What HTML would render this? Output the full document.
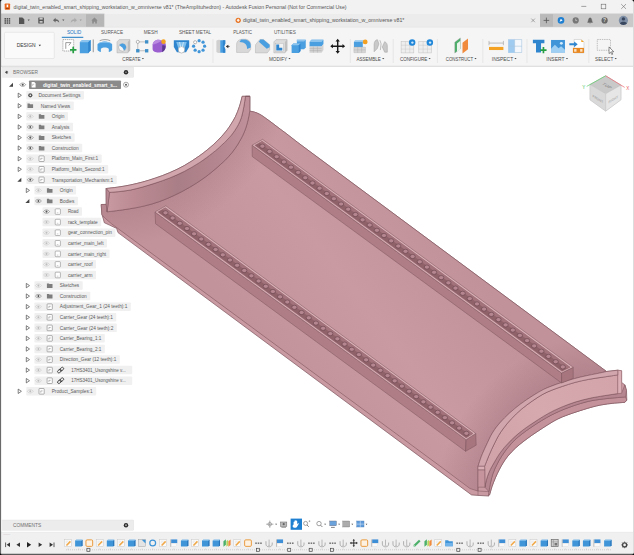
<!DOCTYPE html>
<html><head><meta charset="utf-8"><title>Fusion</title>
<style>
html,body{margin:0;padding:0;}
body{width:634px;height:555px;overflow:hidden;background:#fff;position:relative;font-family:"Liberation Sans",sans-serif;}
</style></head><body>
<svg width="634" height="555" viewBox="0 0 634 555" style="position:absolute;left:0;top:0">
<defs><linearGradient id="fg" gradientUnits="userSpaceOnUse" x1="250" y1="330" x2="420" y2="200"><stop offset="0" stop-color="#c3939b"/><stop offset="0.5" stop-color="#ca9aa2"/><stop offset="1" stop-color="#c2929a"/></linearGradient><linearGradient id="ig" gradientUnits="userSpaceOnUse" x1="106" y1="0" x2="250" y2="0"><stop offset="0" stop-color="#c99aa2"/><stop offset="0.2" stop-color="#bb8a93"/><stop offset="0.5" stop-color="#aa7e86"/><stop offset="0.8" stop-color="#b58790"/><stop offset="1" stop-color="#c0919a"/></linearGradient><linearGradient id="og" gradientUnits="userSpaceOnUse" x1="480" y1="480" x2="620" y2="380"><stop offset="0" stop-color="#cfa1a8"/><stop offset="0.5" stop-color="#d6a9ae"/><stop offset="1" stop-color="#d3a5ab"/></linearGradient><radialGradient id="sh1" gradientUnits="userSpaceOnUse" cx="609" cy="509.5" r="175"><stop offset="0.78" stop-color="#9c6f79" stop-opacity="0.4"/><stop offset="1" stop-color="#9c6f79" stop-opacity="0"/></radialGradient><radialGradient id="sh2" gradientUnits="userSpaceOnUse" cx="108" cy="62" r="185"><stop offset="0.8" stop-color="#a0727c" stop-opacity="0.34"/><stop offset="1" stop-color="#a0727c" stop-opacity="0"/></radialGradient></defs>
<path d="M106.1,188.5C108.1,188.3 114.0,187.7 118.0,187.1C122.0,186.5 126.0,185.9 130.1,185.0C134.1,184.2 138.1,183.2 142.3,182.1C146.6,180.9 150.8,179.7 155.3,178.1C159.9,176.6 164.7,174.8 169.6,172.7C174.5,170.6 179.6,168.2 184.6,165.4C189.6,162.5 195.0,159.1 199.8,155.6C204.7,152.1 209.8,147.9 213.8,144.3C217.7,140.7 220.9,137.3 223.6,134.2C226.4,131.0 228.3,128.4 230.2,125.5C232.2,122.5 233.9,119.6 235.5,116.5C237.0,113.4 238.3,109.9 239.4,106.6C240.6,103.2 241.7,98.0 242.2,96.3L249.9,96.3L249.9,111.0C250.9,111.4 252.9,111.6 254.4,112.1C255.9,112.5 257.7,113.3 259.1,114.0C260.6,114.7 261.1,115.1 263.1,116.4C265.1,117.8 268.4,120.1 271.0,122.1C273.6,124.0 276.3,126.1 278.9,128.1C281.5,130.1 283.3,131.3 286.8,134.0C290.3,136.7 297.8,142.5 300.0,144.2L606.5,371.5L617.8,370.2L621.6,370.8L621.6,382.4L624.9,384.9L626.5,390.6L626.8,400.1L624.9,402.3C622.9,402.5 616.6,402.9 612.8,403.3C608.9,403.7 605.5,404.1 601.9,404.8C598.2,405.5 595.1,406.2 590.8,407.4C586.5,408.6 580.7,410.4 576.0,412.0C571.3,413.5 566.4,415.3 562.6,416.8C558.8,418.4 556.5,419.6 553.1,421.5C549.8,423.4 545.9,426.0 542.3,428.3C538.8,430.6 534.9,433.2 531.8,435.3C528.8,437.5 526.6,439.0 523.9,441.1C521.2,443.2 518.3,445.5 515.6,447.9C513.0,450.4 510.1,453.3 508.0,455.9C505.9,458.4 504.5,460.7 503.0,463.0C501.6,465.3 500.6,467.1 499.3,469.6C498.0,472.1 496.6,474.9 495.4,477.8C494.2,480.6 492.9,483.9 491.9,486.8C491.0,489.6 490.0,493.5 489.6,494.8L488.3,496.0L477.9,495.4L471.5,494.9L118.0,232.6L116.6,228.4L109.5,225.1L104.3,222.7L103.3,218.9L101.9,214.4L101.2,204.5L106.2,204.4Z" fill="#ca9aa2" stroke="#7d545d" stroke-width="0.7" stroke-linejoin="round"/>
<path d="M106.2,204.4L101.2,204.5L101.9,214.6L104.7,217.9L111.8,224.0L440.0,466.1L470.0,488.5L477.9,491.0L478.0,466.3C478.4,465.2 479.4,461.9 480.1,459.9C480.8,457.8 481.6,455.7 482.4,453.8C483.2,451.9 484.0,450.1 484.9,448.2C485.7,446.3 486.6,444.4 487.6,442.4C488.5,440.4 489.5,438.3 490.6,436.1C491.8,434.0 492.8,432.0 494.5,429.7C496.1,427.3 498.0,424.9 500.5,422.2C503.0,419.4 506.0,416.3 509.3,413.3C512.6,410.3 516.5,407.0 520.4,404.1C524.3,401.2 528.8,398.2 532.6,395.8C536.4,393.3 540.0,391.3 543.2,389.6C546.5,388.0 548.7,387.1 552.0,385.9C555.2,384.6 558.8,383.4 562.6,382.2C566.4,380.9 570.8,379.5 574.8,378.5C578.7,377.4 582.5,376.6 586.2,375.8C589.9,375.0 593.5,374.3 596.9,373.6C600.3,372.9 604.9,371.9 606.5,371.5L300.0,144.2C297.8,142.5 290.3,136.7 286.8,134.0C283.3,131.3 281.5,130.1 278.9,128.1C276.3,126.1 273.6,124.0 271.0,122.1C268.4,120.1 265.1,117.8 263.1,116.4C261.1,115.1 260.6,114.7 259.1,114.0C257.7,113.3 255.9,112.5 254.4,112.1C252.9,111.6 250.9,111.4 250.2,111.3L249.9,111.0C249.5,112.2 249.1,115.0 248.7,116.9C248.3,118.7 248.0,120.6 247.4,122.6C246.9,124.6 246.2,126.8 245.5,128.9C244.7,131.0 243.9,133.1 242.9,135.2C241.9,137.3 240.9,139.1 239.6,141.3C238.3,143.6 236.9,146.0 235.0,148.6C233.2,151.2 230.8,154.2 228.4,156.8C226.1,159.5 223.3,162.0 220.7,164.3C218.1,166.7 215.8,168.7 212.9,171.1C209.9,173.5 206.9,176.0 203.0,178.7C199.1,181.4 194.3,184.6 189.6,187.3C184.9,190.1 179.6,192.9 174.6,195.2C169.6,197.6 164.6,199.7 159.6,201.5C154.6,203.3 149.6,204.7 144.6,205.9C139.6,207.2 134.3,208.1 129.6,208.8C124.9,209.6 120.1,210.2 116.4,210.7C112.6,211.2 108.6,211.6 107.1,211.8Z" fill="url(#fg)" stroke="#7d545d" stroke-width="0.6" stroke-linejoin="round"/>
<path d="M106.2,204.4L101.2,204.5L101.9,214.6L104.7,217.9L111.8,224.0L440.0,466.1L470.0,488.5L477.9,491.0L478.0,466.3C478.4,465.2 479.4,461.9 480.1,459.9C480.8,457.8 481.6,455.7 482.4,453.8C483.2,451.9 484.0,450.1 484.9,448.2C485.7,446.3 486.6,444.4 487.6,442.4C488.5,440.4 489.5,438.3 490.6,436.1C491.8,434.0 492.8,432.0 494.5,429.7C496.1,427.3 498.0,424.9 500.5,422.2C503.0,419.4 506.0,416.3 509.3,413.3C512.6,410.3 516.5,407.0 520.4,404.1C524.3,401.2 528.8,398.2 532.6,395.8C536.4,393.3 540.0,391.3 543.2,389.6C546.5,388.0 548.7,387.1 552.0,385.9C555.2,384.6 558.8,383.4 562.6,382.2C566.4,380.9 570.8,379.5 574.8,378.5C578.7,377.4 582.5,376.6 586.2,375.8C589.9,375.0 593.5,374.3 596.9,373.6C600.3,372.9 604.9,371.9 606.5,371.5L300.0,144.2C297.8,142.5 290.3,136.7 286.8,134.0C283.3,131.3 281.5,130.1 278.9,128.1C276.3,126.1 273.6,124.0 271.0,122.1C268.4,120.1 265.1,117.8 263.1,116.4C261.1,115.1 260.6,114.7 259.1,114.0C257.7,113.3 255.9,112.5 254.4,112.1C252.9,111.6 250.9,111.4 250.2,111.3L249.9,111.0C249.5,112.2 249.1,115.0 248.7,116.9C248.3,118.7 248.0,120.6 247.4,122.6C246.9,124.6 246.2,126.8 245.5,128.9C244.7,131.0 243.9,133.1 242.9,135.2C241.9,137.3 240.9,139.1 239.6,141.3C238.3,143.6 236.9,146.0 235.0,148.6C233.2,151.2 230.8,154.2 228.4,156.8C226.1,159.5 223.3,162.0 220.7,164.3C218.1,166.7 215.8,168.7 212.9,171.1C209.9,173.5 206.9,176.0 203.0,178.7C199.1,181.4 194.3,184.6 189.6,187.3C184.9,190.1 179.6,192.9 174.6,195.2C169.6,197.6 164.6,199.7 159.6,201.5C154.6,203.3 149.6,204.7 144.6,205.9C139.6,207.2 134.3,208.1 129.6,208.8C124.9,209.6 120.1,210.2 116.4,210.7C112.6,211.2 108.6,211.6 107.1,211.8Z" fill="url(#sh1)"/>
<path d="M106.2,204.4L101.2,204.5L101.9,214.6L104.7,217.9L111.8,224.0L440.0,466.1L470.0,488.5L477.9,491.0L478.0,466.3C478.4,465.2 479.4,461.9 480.1,459.9C480.8,457.8 481.6,455.7 482.4,453.8C483.2,451.9 484.0,450.1 484.9,448.2C485.7,446.3 486.6,444.4 487.6,442.4C488.5,440.4 489.5,438.3 490.6,436.1C491.8,434.0 492.8,432.0 494.5,429.7C496.1,427.3 498.0,424.9 500.5,422.2C503.0,419.4 506.0,416.3 509.3,413.3C512.6,410.3 516.5,407.0 520.4,404.1C524.3,401.2 528.8,398.2 532.6,395.8C536.4,393.3 540.0,391.3 543.2,389.6C546.5,388.0 548.7,387.1 552.0,385.9C555.2,384.6 558.8,383.4 562.6,382.2C566.4,380.9 570.8,379.5 574.8,378.5C578.7,377.4 582.5,376.6 586.2,375.8C589.9,375.0 593.5,374.3 596.9,373.6C600.3,372.9 604.9,371.9 606.5,371.5L300.0,144.2C297.8,142.5 290.3,136.7 286.8,134.0C283.3,131.3 281.5,130.1 278.9,128.1C276.3,126.1 273.6,124.0 271.0,122.1C268.4,120.1 265.1,117.8 263.1,116.4C261.1,115.1 260.6,114.7 259.1,114.0C257.7,113.3 255.9,112.5 254.4,112.1C252.9,111.6 250.9,111.4 250.2,111.3L249.9,111.0C249.5,112.2 249.1,115.0 248.7,116.9C248.3,118.7 248.0,120.6 247.4,122.6C246.9,124.6 246.2,126.8 245.5,128.9C244.7,131.0 243.9,133.1 242.9,135.2C241.9,137.3 240.9,139.1 239.6,141.3C238.3,143.6 236.9,146.0 235.0,148.6C233.2,151.2 230.8,154.2 228.4,156.8C226.1,159.5 223.3,162.0 220.7,164.3C218.1,166.7 215.8,168.7 212.9,171.1C209.9,173.5 206.9,176.0 203.0,178.7C199.1,181.4 194.3,184.6 189.6,187.3C184.9,190.1 179.6,192.9 174.6,195.2C169.6,197.6 164.6,199.7 159.6,201.5C154.6,203.3 149.6,204.7 144.6,205.9C139.6,207.2 134.3,208.1 129.6,208.8C124.9,209.6 120.1,210.2 116.4,210.7C112.6,211.2 108.6,211.6 107.1,211.8Z" fill="url(#sh2)"/>
<path d="M109.5,192.4C111.2,192.3 116.4,191.9 119.9,191.5C123.4,191.1 126.8,190.7 130.6,190.0C134.3,189.2 138.2,188.2 142.3,187.1C146.5,185.9 150.8,184.6 155.3,183.1C159.9,181.6 164.7,179.9 169.6,178.0C174.5,176.0 179.5,173.9 184.5,171.3C189.4,168.7 194.6,165.7 199.3,162.7C204.1,159.6 209.0,155.8 212.7,152.9C216.4,150.1 219.1,147.6 221.4,145.4C223.8,143.3 225.1,142.0 226.8,140.3C228.4,138.6 229.8,137.1 231.2,135.4C232.5,133.8 233.6,132.3 234.8,130.5C236.0,128.7 237.2,126.9 238.3,124.7C239.4,122.6 240.5,120.2 241.4,117.5C242.3,114.7 242.9,111.5 243.6,108.0C244.3,104.4 245.2,98.2 245.5,96.3L249.9,96.3L249.8,111.2C249.5,112.2 249.1,115.0 248.7,116.9C248.3,118.7 248.0,120.6 247.4,122.6C246.9,124.6 246.2,126.8 245.5,128.9C244.7,131.0 243.9,133.1 242.9,135.2C241.9,137.3 240.9,139.1 239.6,141.3C238.3,143.6 236.9,146.0 235.0,148.6C233.2,151.2 230.8,154.2 228.4,156.8C226.1,159.5 223.3,162.0 220.7,164.3C218.1,166.7 215.8,168.7 212.9,171.1C209.9,173.5 206.9,176.0 203.0,178.7C199.1,181.4 194.3,184.6 189.6,187.3C184.9,190.1 179.6,192.9 174.6,195.2C169.6,197.6 164.6,199.7 159.6,201.5C154.6,203.3 149.6,204.7 144.6,205.9C139.6,207.2 134.3,208.1 129.6,208.8C124.9,209.6 120.1,210.2 116.4,210.7C112.6,211.2 108.6,211.6 107.1,211.8Z" fill="url(#ig)" stroke="#7d545d" stroke-width="0.6" stroke-linejoin="round"/>
<path d="M106.1,188.5C108.1,188.3 114.0,187.7 118.0,187.1C122.0,186.5 126.0,185.9 130.1,185.0C134.1,184.2 138.1,183.2 142.3,182.1C146.6,180.9 150.8,179.7 155.3,178.1C159.9,176.6 164.7,174.8 169.6,172.7C174.5,170.6 179.6,168.2 184.6,165.4C189.6,162.5 195.0,159.1 199.8,155.6C204.7,152.1 209.8,147.9 213.8,144.3C217.7,140.7 220.9,137.3 223.6,134.2C226.4,131.0 228.3,128.4 230.2,125.5C232.2,122.5 233.9,119.6 235.5,116.5C237.0,113.4 238.3,109.9 239.4,106.6C240.6,103.2 241.7,98.0 242.2,96.3L249.9,96.3L245.5,96.3C245.2,98.2 244.3,104.4 243.6,108.0C242.9,111.5 242.3,114.7 241.4,117.5C240.5,120.2 239.4,122.6 238.3,124.7C237.2,126.9 236.0,128.7 234.8,130.5C233.6,132.3 232.5,133.8 231.2,135.4C229.8,137.1 228.4,138.6 226.8,140.3C225.1,142.0 223.8,143.3 221.4,145.4C219.1,147.6 216.4,150.1 212.7,152.9C209.0,155.8 204.1,159.6 199.3,162.7C194.6,165.7 189.4,168.7 184.5,171.3C179.5,173.9 174.5,176.0 169.6,178.0C164.7,179.9 159.9,181.6 155.3,183.1C150.8,184.6 146.5,185.9 142.3,187.1C138.2,188.2 134.3,189.2 130.6,190.0C126.8,190.7 123.4,191.1 119.9,191.5C116.4,191.9 111.2,192.3 109.5,192.4Z" fill="#d2a6ad" stroke="#7d545d" stroke-width="0.6" stroke-linejoin="round"/>
<path d="M106.1,188.5L109.5,192.4L107.1,211.8L106.2,204.4Z" fill="#b88892" stroke="#7d545d" stroke-width="0.5"/>
<path d="M488.9,491.7C489.2,490.1 490.0,484.9 490.7,481.9C491.4,478.8 492.0,476.2 493.0,473.4C494.0,470.5 495.3,467.7 496.8,464.7C498.2,461.8 500.0,458.7 501.9,455.8C503.8,452.8 506.0,449.9 508.1,447.3C510.3,444.6 512.6,442.2 514.9,439.9C517.2,437.7 519.4,435.9 522.0,433.9C524.7,431.8 527.6,429.7 530.9,427.5C534.1,425.3 538.0,422.7 541.4,420.7C544.8,418.6 548.1,416.7 551.2,415.1C554.4,413.5 557.0,412.3 560.1,410.9C563.2,409.6 566.4,408.3 569.8,407.1C573.2,405.8 576.8,404.5 580.5,403.5C584.2,402.4 587.6,401.4 592.0,400.6C596.5,399.8 601.6,399.1 607.2,398.5C612.8,397.9 622.4,397.2 625.5,396.9L626.8,400.1L624.9,402.3C622.9,402.5 616.6,402.9 612.8,403.3C608.9,403.7 605.5,404.1 601.9,404.8C598.2,405.5 595.1,406.2 590.8,407.4C586.5,408.6 580.7,410.4 576.0,412.0C571.3,413.5 566.4,415.3 562.6,416.8C558.8,418.4 556.5,419.6 553.1,421.5C549.8,423.4 545.9,426.0 542.3,428.3C538.8,430.6 534.9,433.2 531.8,435.3C528.8,437.5 526.6,439.0 523.9,441.1C521.2,443.2 518.3,445.5 515.6,447.9C513.0,450.4 510.1,453.3 508.0,455.9C505.9,458.4 504.5,460.7 503.0,463.0C501.6,465.3 500.6,467.1 499.3,469.6C498.0,472.1 496.6,474.9 495.4,477.8C494.2,480.6 492.9,483.9 491.9,486.8C491.0,489.6 490.0,493.5 489.6,494.8L488.3,496.0Z" fill="#c4929b" stroke="#7d545d" stroke-width="0.6" stroke-linejoin="round"/>
<path d="M484.9,487.2C485.1,486.0 485.7,482.6 486.4,480.1C487.0,477.7 487.9,474.9 488.9,472.6C489.9,470.2 491.0,468.1 492.2,466.0C493.3,463.9 494.5,462.0 495.7,459.9C496.9,457.9 498.0,455.9 499.4,453.9C500.9,451.8 502.5,449.7 504.4,447.4C506.4,445.2 508.7,442.6 511.2,440.1C513.7,437.7 516.6,435.0 519.6,432.6C522.6,430.1 526.0,427.7 529.2,425.5C532.4,423.3 535.5,421.3 538.8,419.2C542.0,417.2 545.1,415.2 548.8,413.2C552.5,411.2 556.5,409.2 560.9,407.4C565.3,405.5 570.2,403.7 575.1,402.1C580.0,400.6 585.3,399.2 590.5,398.1C595.6,397.0 601.0,396.2 606.2,395.4C611.4,394.5 619.0,393.5 621.6,393.1L624.9,384.9L626.5,390.6L625.5,396.9C622.4,397.2 612.8,397.9 607.2,398.5C601.6,399.1 596.5,399.8 592.0,400.6C587.6,401.4 584.2,402.4 580.5,403.5C576.8,404.5 573.2,405.8 569.8,407.1C566.4,408.3 563.2,409.6 560.1,410.9C557.0,412.3 554.4,413.5 551.2,415.1C548.1,416.7 544.8,418.6 541.4,420.7C538.0,422.7 534.1,425.3 530.9,427.5C527.6,429.7 524.7,431.8 522.0,433.9C519.4,435.9 517.2,437.7 514.9,439.9C512.6,442.2 510.3,444.6 508.1,447.3C506.0,449.9 503.8,452.8 501.9,455.8C500.0,458.7 498.2,461.8 496.8,464.7C495.3,467.7 494.0,470.5 493.0,473.4C492.0,476.2 491.4,478.8 490.7,481.9C490.0,484.9 489.2,490.1 488.9,491.7Z" fill="#b68690" stroke="#7d545d" stroke-width="0.5" stroke-linejoin="round"/>
<path d="M484.6,466.3C484.9,465.5 485.8,463.3 486.5,461.5C487.2,459.6 488.0,457.5 488.9,455.5C489.8,453.4 490.7,451.3 491.7,449.2C492.7,447.0 493.8,444.8 494.9,442.6C496.1,440.3 497.1,438.0 498.6,435.5C500.1,433.0 501.8,430.4 504.0,427.6C506.1,424.7 508.8,421.5 511.7,418.5C514.6,415.4 517.7,412.4 521.2,409.4C524.7,406.5 528.9,403.3 532.6,400.8C536.3,398.2 540.0,395.9 543.2,394.1C546.5,392.4 548.7,391.4 552.0,390.1C555.2,388.8 558.7,387.6 562.6,386.3C566.5,385.0 570.8,383.5 575.1,382.4C579.4,381.2 583.8,380.3 588.5,379.4C593.2,378.5 598.4,377.8 603.3,377.1C608.2,376.3 615.4,375.3 617.8,374.9L617.8,393.6C603.6,395.8 595.6,397.0 590.5,398.1C585.3,399.2 580.0,400.6 575.1,402.1C570.2,403.7 565.3,405.5 560.9,407.4C556.5,409.2 552.5,411.2 548.8,413.2C545.1,415.2 542.0,417.2 538.8,419.2C535.5,421.3 532.4,423.3 529.2,425.5C526.0,427.7 522.6,430.1 519.6,432.6C516.6,435.0 513.7,437.7 511.2,440.1C508.7,442.6 506.4,445.2 504.4,447.4C502.5,449.7 500.9,451.8 499.4,453.9C498.0,455.9 496.9,457.9 495.7,459.9C494.5,462.0 493.3,463.9 492.2,466.0C491.0,468.1 489.9,470.2 488.9,472.6C487.9,474.9 487.0,477.7 486.4,480.1C485.7,482.6 485.1,486.0 484.9,487.2Z" fill="url(#og)" stroke="#7d545d" stroke-width="0.6" stroke-linejoin="round"/>
<path d="M617.8,370.2L621.6,370.8L621.6,393.1L617.8,393.6Z" fill="#dbb0b6" stroke="#94666f" stroke-width="0.5" stroke-linejoin="round"/>
<path d="M478.0,466.3C478.4,465.2 479.4,461.9 480.1,459.9C480.8,457.8 481.6,455.7 482.4,453.8C483.2,451.9 484.0,450.1 484.9,448.2C485.7,446.3 486.6,444.4 487.6,442.4C488.5,440.4 489.5,438.3 490.6,436.1C491.8,434.0 492.8,432.0 494.5,429.7C496.1,427.3 498.0,424.9 500.5,422.2C503.0,419.4 506.0,416.3 509.3,413.3C512.6,410.3 516.5,407.0 520.4,404.1C524.3,401.2 528.8,398.2 532.6,395.8C536.4,393.3 540.0,391.3 543.2,389.6C546.5,388.0 548.7,387.1 552.0,385.9C555.2,384.6 558.8,383.4 562.6,382.2C566.4,380.9 570.8,379.5 574.8,378.5C578.7,377.4 582.5,376.6 586.2,375.8C589.9,375.0 593.5,374.3 596.9,373.6C600.3,372.9 604.9,371.9 606.5,371.5L617.8,370.2L617.8,374.9C615.4,375.3 608.2,376.3 603.3,377.1C598.4,377.8 593.2,378.5 588.5,379.4C583.8,380.3 579.4,381.2 575.1,382.4C570.8,383.5 566.5,385.0 562.6,386.3C558.7,387.6 555.2,388.8 552.0,390.1C548.7,391.4 546.5,392.4 543.2,394.1C540.0,395.9 536.3,398.2 532.6,400.8C528.9,403.3 524.7,406.5 521.2,409.4C517.7,412.4 514.6,415.4 511.7,418.5C508.8,421.5 506.1,424.7 504.0,427.6C501.8,430.4 500.1,433.0 498.6,435.5C497.1,438.0 496.1,440.3 494.9,442.6C493.8,444.8 492.7,447.0 491.7,449.2C490.7,451.3 489.8,453.4 488.9,455.5C488.0,457.5 487.2,459.6 486.5,461.5C485.8,463.3 484.9,465.5 484.6,466.3Z" fill="#d2a6ad" stroke="#7d545d" stroke-width="0.6" stroke-linejoin="round"/>
<path d="M478,466.3L484.6,466.3L484.8,470L478,470Z" fill="#d9aeb4" stroke="#7d545d" stroke-width="0.5"/>
<path d="M478,470L484.8,470L484.9,487.2L478,487.2Z" fill="#c6949d" stroke="#7d545d" stroke-width="0.5"/>
<path d="M478,487.2L478,495.4M478,491L488.9,491.7M484.9,487.2L484.9,487.2" fill="none" stroke="#7d545d" stroke-width="0.5"/>
<path d="M252.1,145.2L561.6,373.0L561.6,383.0L252.2,156.5Z" fill="#ae7d86" stroke="#7d545d" stroke-width="0.5" stroke-linejoin="round"/>
<path d="M561.6,373.0L573.2,367.3L573.2,378.4L561.6,383.0Z" fill="#a6757e" stroke="#7d545d" stroke-width="0.5" stroke-linejoin="round"/>
<path d="M252.1,145.2L262.6,139.4L573.2,367.3L561.6,373.0Z" fill="#d9b0b6" stroke="#7d545d" stroke-width="0.5" stroke-linejoin="round"/>
<path d="M254.8,145.3L262.2,141.2L570.1,367.3L562.0,371.3Z" fill="#8f6169" stroke="#94666f" stroke-width="0.4"/>
<path d="M259.4,142.8L262.2,141.2L570.1,367.3L567.0,368.8Z" fill="#a3737c"/>
<ellipse cx="262.4" cy="146.2" rx="2.6" ry="2.1" fill="#b58690" stroke="#68434c" stroke-width="0.6"/>
<ellipse cx="269.6" cy="151.4" rx="2.6" ry="2.1" fill="#b58690" stroke="#68434c" stroke-width="0.6"/>
<ellipse cx="276.7" cy="156.7" rx="2.6" ry="2.1" fill="#b58690" stroke="#68434c" stroke-width="0.6"/>
<ellipse cx="283.9" cy="161.9" rx="2.6" ry="2.1" fill="#b58690" stroke="#68434c" stroke-width="0.6"/>
<ellipse cx="291.0" cy="167.2" rx="2.6" ry="2.1" fill="#b58690" stroke="#68434c" stroke-width="0.6"/>
<ellipse cx="298.2" cy="172.4" rx="2.6" ry="2.1" fill="#b58690" stroke="#68434c" stroke-width="0.6"/>
<ellipse cx="305.3" cy="177.7" rx="2.6" ry="2.1" fill="#b58690" stroke="#68434c" stroke-width="0.6"/>
<ellipse cx="312.5" cy="183.0" rx="2.6" ry="2.1" fill="#b58690" stroke="#68434c" stroke-width="0.6"/>
<ellipse cx="319.6" cy="188.2" rx="2.6" ry="2.1" fill="#b58690" stroke="#68434c" stroke-width="0.6"/>
<ellipse cx="326.8" cy="193.5" rx="2.6" ry="2.1" fill="#b58690" stroke="#68434c" stroke-width="0.6"/>
<ellipse cx="333.9" cy="198.7" rx="2.6" ry="2.1" fill="#b58690" stroke="#68434c" stroke-width="0.6"/>
<ellipse cx="341.1" cy="204.0" rx="2.6" ry="2.1" fill="#b58690" stroke="#68434c" stroke-width="0.6"/>
<ellipse cx="348.2" cy="209.2" rx="2.6" ry="2.1" fill="#b58690" stroke="#68434c" stroke-width="0.6"/>
<ellipse cx="355.4" cy="214.5" rx="2.6" ry="2.1" fill="#b58690" stroke="#68434c" stroke-width="0.6"/>
<ellipse cx="362.6" cy="219.8" rx="2.6" ry="2.1" fill="#b58690" stroke="#68434c" stroke-width="0.6"/>
<ellipse cx="369.7" cy="225.0" rx="2.6" ry="2.1" fill="#b58690" stroke="#68434c" stroke-width="0.6"/>
<ellipse cx="376.9" cy="230.3" rx="2.6" ry="2.1" fill="#b58690" stroke="#68434c" stroke-width="0.6"/>
<ellipse cx="384.0" cy="235.5" rx="2.6" ry="2.1" fill="#b58690" stroke="#68434c" stroke-width="0.6"/>
<ellipse cx="391.2" cy="240.8" rx="2.6" ry="2.1" fill="#b58690" stroke="#68434c" stroke-width="0.6"/>
<ellipse cx="398.3" cy="246.0" rx="2.6" ry="2.1" fill="#b58690" stroke="#68434c" stroke-width="0.6"/>
<ellipse cx="405.5" cy="251.3" rx="2.6" ry="2.1" fill="#b58690" stroke="#68434c" stroke-width="0.6"/>
<ellipse cx="412.6" cy="256.5" rx="2.6" ry="2.1" fill="#b58690" stroke="#68434c" stroke-width="0.6"/>
<ellipse cx="419.8" cy="261.8" rx="2.6" ry="2.1" fill="#b58690" stroke="#68434c" stroke-width="0.6"/>
<ellipse cx="426.9" cy="267.1" rx="2.6" ry="2.1" fill="#b58690" stroke="#68434c" stroke-width="0.6"/>
<ellipse cx="434.1" cy="272.3" rx="2.6" ry="2.1" fill="#b58690" stroke="#68434c" stroke-width="0.6"/>
<ellipse cx="441.2" cy="277.6" rx="2.6" ry="2.1" fill="#b58690" stroke="#68434c" stroke-width="0.6"/>
<ellipse cx="448.4" cy="282.8" rx="2.6" ry="2.1" fill="#b58690" stroke="#68434c" stroke-width="0.6"/>
<ellipse cx="455.5" cy="288.1" rx="2.6" ry="2.1" fill="#b58690" stroke="#68434c" stroke-width="0.6"/>
<ellipse cx="462.7" cy="293.3" rx="2.6" ry="2.1" fill="#b58690" stroke="#68434c" stroke-width="0.6"/>
<ellipse cx="469.8" cy="298.6" rx="2.6" ry="2.1" fill="#b58690" stroke="#68434c" stroke-width="0.6"/>
<ellipse cx="477.0" cy="303.9" rx="2.6" ry="2.1" fill="#b58690" stroke="#68434c" stroke-width="0.6"/>
<ellipse cx="484.1" cy="309.1" rx="2.6" ry="2.1" fill="#b58690" stroke="#68434c" stroke-width="0.6"/>
<ellipse cx="491.3" cy="314.4" rx="2.6" ry="2.1" fill="#b58690" stroke="#68434c" stroke-width="0.6"/>
<ellipse cx="498.5" cy="319.6" rx="2.6" ry="2.1" fill="#b58690" stroke="#68434c" stroke-width="0.6"/>
<ellipse cx="505.6" cy="324.9" rx="2.6" ry="2.1" fill="#b58690" stroke="#68434c" stroke-width="0.6"/>
<ellipse cx="512.8" cy="330.1" rx="2.6" ry="2.1" fill="#b58690" stroke="#68434c" stroke-width="0.6"/>
<ellipse cx="519.9" cy="335.4" rx="2.6" ry="2.1" fill="#b58690" stroke="#68434c" stroke-width="0.6"/>
<ellipse cx="527.1" cy="340.6" rx="2.6" ry="2.1" fill="#b58690" stroke="#68434c" stroke-width="0.6"/>
<ellipse cx="534.2" cy="345.9" rx="2.6" ry="2.1" fill="#b58690" stroke="#68434c" stroke-width="0.6"/>
<ellipse cx="541.4" cy="351.2" rx="2.6" ry="2.1" fill="#b58690" stroke="#68434c" stroke-width="0.6"/>
<ellipse cx="548.5" cy="356.4" rx="2.6" ry="2.1" fill="#b58690" stroke="#68434c" stroke-width="0.6"/>
<ellipse cx="555.7" cy="361.7" rx="2.6" ry="2.1" fill="#b58690" stroke="#68434c" stroke-width="0.6"/>
<ellipse cx="562.8" cy="366.9" rx="2.6" ry="2.1" fill="#b58690" stroke="#68434c" stroke-width="0.6"/>
<path d="M155.0,212.0L466.1,439.7L465.6,451.3L155.6,223.8Z" fill="#ae7d86" stroke="#7d545d" stroke-width="0.5" stroke-linejoin="round"/>
<path d="M466.1,439.7L475.8,433.4L476.2,445.2L465.6,451.3Z" fill="#a6757e" stroke="#7d545d" stroke-width="0.5" stroke-linejoin="round"/>
<path d="M155.0,212.0L165.8,205.8L475.8,433.4L466.1,439.7Z" fill="#d9b0b6" stroke="#7d545d" stroke-width="0.5" stroke-linejoin="round"/>
<path d="M157.8,212.0L165.3,207.7L473.0,433.5L466.2,437.9Z" fill="#8f6169" stroke="#94666f" stroke-width="0.4"/>
<path d="M162.4,209.4L165.3,207.7L473.0,433.5L470.4,435.2Z" fill="#a3737c"/>
<ellipse cx="165.5" cy="212.8" rx="2.6" ry="2.1" fill="#b58690" stroke="#68434c" stroke-width="0.6"/>
<ellipse cx="172.6" cy="218.0" rx="2.6" ry="2.1" fill="#b58690" stroke="#68434c" stroke-width="0.6"/>
<ellipse cx="179.8" cy="223.3" rx="2.6" ry="2.1" fill="#b58690" stroke="#68434c" stroke-width="0.6"/>
<ellipse cx="187.0" cy="228.5" rx="2.6" ry="2.1" fill="#b58690" stroke="#68434c" stroke-width="0.6"/>
<ellipse cx="194.1" cy="233.8" rx="2.6" ry="2.1" fill="#b58690" stroke="#68434c" stroke-width="0.6"/>
<ellipse cx="201.3" cy="239.0" rx="2.6" ry="2.1" fill="#b58690" stroke="#68434c" stroke-width="0.6"/>
<ellipse cx="208.5" cy="244.3" rx="2.6" ry="2.1" fill="#b58690" stroke="#68434c" stroke-width="0.6"/>
<ellipse cx="215.6" cy="249.5" rx="2.6" ry="2.1" fill="#b58690" stroke="#68434c" stroke-width="0.6"/>
<ellipse cx="222.8" cy="254.8" rx="2.6" ry="2.1" fill="#b58690" stroke="#68434c" stroke-width="0.6"/>
<ellipse cx="230.0" cy="260.0" rx="2.6" ry="2.1" fill="#b58690" stroke="#68434c" stroke-width="0.6"/>
<ellipse cx="237.1" cy="265.3" rx="2.6" ry="2.1" fill="#b58690" stroke="#68434c" stroke-width="0.6"/>
<ellipse cx="244.3" cy="270.5" rx="2.6" ry="2.1" fill="#b58690" stroke="#68434c" stroke-width="0.6"/>
<ellipse cx="251.4" cy="275.8" rx="2.6" ry="2.1" fill="#b58690" stroke="#68434c" stroke-width="0.6"/>
<ellipse cx="258.6" cy="281.0" rx="2.6" ry="2.1" fill="#b58690" stroke="#68434c" stroke-width="0.6"/>
<ellipse cx="265.8" cy="286.3" rx="2.6" ry="2.1" fill="#b58690" stroke="#68434c" stroke-width="0.6"/>
<ellipse cx="272.9" cy="291.5" rx="2.6" ry="2.1" fill="#b58690" stroke="#68434c" stroke-width="0.6"/>
<ellipse cx="280.1" cy="296.8" rx="2.6" ry="2.1" fill="#b58690" stroke="#68434c" stroke-width="0.6"/>
<ellipse cx="287.3" cy="302.0" rx="2.6" ry="2.1" fill="#b58690" stroke="#68434c" stroke-width="0.6"/>
<ellipse cx="294.4" cy="307.3" rx="2.6" ry="2.1" fill="#b58690" stroke="#68434c" stroke-width="0.6"/>
<ellipse cx="301.6" cy="312.5" rx="2.6" ry="2.1" fill="#b58690" stroke="#68434c" stroke-width="0.6"/>
<ellipse cx="308.8" cy="317.8" rx="2.6" ry="2.1" fill="#b58690" stroke="#68434c" stroke-width="0.6"/>
<ellipse cx="315.9" cy="323.1" rx="2.6" ry="2.1" fill="#b58690" stroke="#68434c" stroke-width="0.6"/>
<ellipse cx="323.1" cy="328.3" rx="2.6" ry="2.1" fill="#b58690" stroke="#68434c" stroke-width="0.6"/>
<ellipse cx="330.3" cy="333.6" rx="2.6" ry="2.1" fill="#b58690" stroke="#68434c" stroke-width="0.6"/>
<ellipse cx="337.4" cy="338.8" rx="2.6" ry="2.1" fill="#b58690" stroke="#68434c" stroke-width="0.6"/>
<ellipse cx="344.6" cy="344.1" rx="2.6" ry="2.1" fill="#b58690" stroke="#68434c" stroke-width="0.6"/>
<ellipse cx="351.8" cy="349.3" rx="2.6" ry="2.1" fill="#b58690" stroke="#68434c" stroke-width="0.6"/>
<ellipse cx="358.9" cy="354.6" rx="2.6" ry="2.1" fill="#b58690" stroke="#68434c" stroke-width="0.6"/>
<ellipse cx="366.1" cy="359.8" rx="2.6" ry="2.1" fill="#b58690" stroke="#68434c" stroke-width="0.6"/>
<ellipse cx="373.2" cy="365.1" rx="2.6" ry="2.1" fill="#b58690" stroke="#68434c" stroke-width="0.6"/>
<ellipse cx="380.4" cy="370.3" rx="2.6" ry="2.1" fill="#b58690" stroke="#68434c" stroke-width="0.6"/>
<ellipse cx="387.6" cy="375.6" rx="2.6" ry="2.1" fill="#b58690" stroke="#68434c" stroke-width="0.6"/>
<ellipse cx="394.7" cy="380.8" rx="2.6" ry="2.1" fill="#b58690" stroke="#68434c" stroke-width="0.6"/>
<ellipse cx="401.9" cy="386.1" rx="2.6" ry="2.1" fill="#b58690" stroke="#68434c" stroke-width="0.6"/>
<ellipse cx="409.1" cy="391.3" rx="2.6" ry="2.1" fill="#b58690" stroke="#68434c" stroke-width="0.6"/>
<ellipse cx="416.2" cy="396.6" rx="2.6" ry="2.1" fill="#b58690" stroke="#68434c" stroke-width="0.6"/>
<ellipse cx="423.4" cy="401.8" rx="2.6" ry="2.1" fill="#b58690" stroke="#68434c" stroke-width="0.6"/>
<ellipse cx="430.6" cy="407.1" rx="2.6" ry="2.1" fill="#b58690" stroke="#68434c" stroke-width="0.6"/>
<ellipse cx="437.7" cy="412.3" rx="2.6" ry="2.1" fill="#b58690" stroke="#68434c" stroke-width="0.6"/>
<ellipse cx="444.9" cy="417.6" rx="2.6" ry="2.1" fill="#b58690" stroke="#68434c" stroke-width="0.6"/>
<ellipse cx="452.1" cy="422.8" rx="2.6" ry="2.1" fill="#b58690" stroke="#68434c" stroke-width="0.6"/>
<ellipse cx="459.2" cy="428.1" rx="2.6" ry="2.1" fill="#b58690" stroke="#68434c" stroke-width="0.6"/>
<ellipse cx="466.4" cy="433.3" rx="2.6" ry="2.1" fill="#b58690" stroke="#68434c" stroke-width="0.6"/>
</svg>
<svg width="634" height="555" viewBox="0 0 634 555" style="position:absolute;left:0;top:0" font-family="Liberation Sans, sans-serif">
<rect x="0.0" y="0.0" width="634.0" height="13.5" fill="#f2f2f2" />
<rect x="4.7" y="3.5" width="5.4" height="6.3" fill="#e8651a" rx="0.8" />
<path d="M6.6,4.6h1.6v2.6h-1.6z" fill="#fff" />
<rect x="5.9" y="8.1" width="3.0" height="0.9" fill="#9a3d0c" />
<text x="13.6" y="9.3" font-size="5.3" fill="#555" text-anchor="start" textLength="333.0" lengthAdjust="spacingAndGlyphs" >digital_twin_enabled_smart_shipping_workstation_w_omniverse v81* (TheAmplituhedron) - Autodesk Fusion Personal (Not for Commercial Use)</text>
<path d="M581.3,6.4h5" fill="none" stroke="#6a6a6a" stroke-width="0.6" />
<rect x="601.2" y="4.2" width="4.6" height="4.6" fill="none" stroke="#6a6a6a" stroke-width="0.6" />
<path d="M621.2,4.1l4.8,4.8M626,4.1l-4.8,4.8" fill="none" stroke="#6a6a6a" stroke-width="0.6" />
<rect x="0.0" y="13.5" width="634.0" height="13.7" fill="#ececec" />
<rect x="0.0" y="13.5" width="104.5" height="13.7" fill="#c9c9c9" />
<rect x="540.0" y="13.5" width="94.0" height="13.7" fill="#c9c9c9" />
<rect x="4.5" y="18.1" width="1.5" height="1.5" fill="#4d4d4d" />
<rect x="4.5" y="20.2" width="1.5" height="1.5" fill="#4d4d4d" />
<rect x="4.5" y="22.3" width="1.5" height="1.5" fill="#4d4d4d" />
<rect x="6.6" y="18.1" width="1.5" height="1.5" fill="#4d4d4d" />
<rect x="6.6" y="20.2" width="1.5" height="1.5" fill="#4d4d4d" />
<rect x="6.6" y="22.3" width="1.5" height="1.5" fill="#4d4d4d" />
<rect x="8.7" y="18.1" width="1.5" height="1.5" fill="#4d4d4d" />
<rect x="8.7" y="20.2" width="1.5" height="1.5" fill="#4d4d4d" />
<rect x="8.7" y="22.3" width="1.5" height="1.5" fill="#4d4d4d" />
<path d="M19,17.4h3.4l1.9,1.9v4.7h-5.3z" fill="#555" />
<path d="M27.6,19.6h2.2l-1.1,1.4z" fill="#555" />
<rect x="38.3" y="17.6" width="5.6" height="5.8" fill="#555" rx="0.5" />
<rect x="39.5" y="17.6" width="3.2" height="2.0" fill="#c9c9c9" />
<rect x="39.6" y="21.0" width="3.0" height="1.7" fill="#c9c9c9" />
<path d="M53,20.2l2.6,-2.4v1.5c2.6,0 3.6,1.4 3.6,3.6c-0.7,-1.4 -1.7,-1.9 -3.6,-1.9v1.6z" fill="#666" />
<path d="M62.2,19.6h2.2l-1.1,1.4z" fill="#555" />
<path d="M77,20.2l-2.6,-2.4v1.5c-2.6,0 -3.6,1.4 -3.6,3.6c0.7,-1.4 1.7,-1.9 3.6,-1.9v1.6z" fill="#aaa" />
<path d="M79.6,19.6h2.2l-1.1,1.4z" fill="#999" />
<rect x="86.0" y="14.2" width="18.0" height="12.6" fill="#b6b6b6" />
<path d="M91.3,20.6l3.2,-3l3.2,3h-0.9v3h-1.6v-1.9h-1.4v1.9h-1.6v-3z" fill="#8a8a8a" />
<circle cx="238.2" cy="20.3" r="2.6" fill="#e8711f"/>
<path d="M236.6,20.3l1.6,-1.7l1.6,1.7l-1.6,1.7z" fill="#fff2e6" />
<text x="242.9" y="22.2" font-size="5.2" fill="#555" text-anchor="start" textLength="161.5" lengthAdjust="spacingAndGlyphs" >digital_twin_enabled_smart_shipping_workstation_w_omniverse v81*</text>
<path d="M531.3,18.6l3.6,3.6M534.9,18.6l-3.6,3.6" fill="none" stroke="#777" stroke-width="0.6" />
<rect x="540.0" y="14.2" width="13.0" height="12.6" fill="#b9b9b9" />
<path d="M543.6,20.4h5.6M546.4,17.6v5.6" fill="none" stroke="#555" stroke-width="0.8" />
<circle cx="561.0" cy="20.4" r="3.3" fill="#1f7fd1"/>
<path d="M559.6,21.8l1.2,-3l1.8,1.6z" fill="#fff" />
<circle cx="575.7" cy="20.4" r="3.1" fill="#777"/>
<path d="M575.7,18.6v2h1.5" fill="none" stroke="#ddd" stroke-width="0.6" />
<path d="M587.6,22.4c1,-1 0.6,-4.6 2.5,-4.6s1.5,3.6 2.5,4.6zM589.3,23.1h1.6" fill="#666" stroke="#666" stroke-width="0.4" />
<circle cx="604.6" cy="20.4" r="3.1" fill="#666"/>
<text x="604.6" y="22.2" font-size="5" fill="#ddd" text-anchor="middle" font-weight="bold" >?</text>
<circle cx="623.4" cy="20.4" r="4.6" fill="#7f8fa6"/>
<circle cx="623.4" cy="18.9" r="1.7" fill="#39475e"/>
<path d="M619.9,23.6c0.6,-2.6 6.4,-2.6 7,0c-1.6,1.9 -5.4,1.9 -7,0z" fill="#39475e" />
<rect x="0.0" y="27.2" width="634.0" height="39.0" fill="#f5f5f5" />
<path d="M0,66.3h634" fill="none" stroke="#d0d0d0" stroke-width="0.8" />
<path d="M0,27.3h634" fill="none" stroke="#dcdcdc" stroke-width="0.5" />
<rect x="4.5" y="32.3" width="49.8" height="26.2" fill="#fafafa" stroke="#dedede" stroke-width="0.6" rx="1" />
<text x="26.2" y="47.2" font-size="4.9" fill="#333" text-anchor="middle" textLength="19.0" lengthAdjust="spacingAndGlyphs" >DESIGN</text>
<path d="M38.6,44.7h2.4l-1.2,1.5z" fill="#333" />
<text x="66.9" y="34.1" font-size="5" fill="#1a78c2" text-anchor="start" textLength="14.4" lengthAdjust="spacingAndGlyphs" >SOLID</text>
<text x="101.0" y="34.1" font-size="5" fill="#555" text-anchor="start" textLength="22.0" lengthAdjust="spacingAndGlyphs" >SURFACE</text>
<text x="143.8" y="34.1" font-size="5" fill="#555" text-anchor="start" textLength="13.8" lengthAdjust="spacingAndGlyphs" >MESH</text>
<text x="178.9" y="34.1" font-size="5" fill="#555" text-anchor="start" textLength="32.3" lengthAdjust="spacingAndGlyphs" >SHEET METAL</text>
<text x="233.2" y="34.1" font-size="5" fill="#555" text-anchor="start" textLength="18.9" lengthAdjust="spacingAndGlyphs" >PLASTIC</text>
<text x="274.0" y="34.1" font-size="5" fill="#555" text-anchor="start" textLength="21.8" lengthAdjust="spacingAndGlyphs" >UTILITIES</text>
<path d="M61.8,37.3h21.5" fill="none" stroke="#1a78c2" stroke-width="1" />
<path d="M213,39v24" fill="none" stroke="#dcdcdc" stroke-width="0.6" />
<path d="M350.3,39v24" fill="none" stroke="#dcdcdc" stroke-width="0.6" />
<path d="M393.2,39v24" fill="none" stroke="#dcdcdc" stroke-width="0.6" />
<path d="M437.4,39v24" fill="none" stroke="#dcdcdc" stroke-width="0.6" />
<path d="M482.8,39v24" fill="none" stroke="#dcdcdc" stroke-width="0.6" />
<path d="M527,39v24" fill="none" stroke="#dcdcdc" stroke-width="0.6" />
<path d="M588.8,39v24" fill="none" stroke="#dcdcdc" stroke-width="0.6" />
<text x="131.5" y="60.6" font-size="4.7" fill="#4a4a4a" text-anchor="middle" textLength="18.3" lengthAdjust="spacingAndGlyphs" >CREATE</text>
<path d="M141.8,57.9h2.2l-1.1,1.4z" fill="#444" />
<text x="278.1" y="60.6" font-size="4.7" fill="#4a4a4a" text-anchor="middle" textLength="18.3" lengthAdjust="spacingAndGlyphs" >MODIFY</text>
<path d="M288.4,57.9h2.2l-1.1,1.4z" fill="#444" />
<text x="368.7" y="60.6" font-size="4.7" fill="#4a4a4a" text-anchor="middle" textLength="24.4" lengthAdjust="spacingAndGlyphs" >ASSEMBLE</text>
<path d="M382.1,57.9h2.2l-1.1,1.4z" fill="#444" />
<text x="413.6" y="60.6" font-size="4.7" fill="#4a4a4a" text-anchor="middle" textLength="27.4" lengthAdjust="spacingAndGlyphs" >CONFIGURE</text>
<path d="M428.5,57.9h2.2l-1.1,1.4z" fill="#444" />
<text x="459.5" y="60.6" font-size="4.7" fill="#4a4a4a" text-anchor="middle" textLength="27.4" lengthAdjust="spacingAndGlyphs" >CONSTRUCT</text>
<path d="M474.4,57.9h2.2l-1.1,1.4z" fill="#444" />
<text x="502.5" y="60.6" font-size="4.7" fill="#4a4a4a" text-anchor="middle" textLength="21.3" lengthAdjust="spacingAndGlyphs" >INSPECT</text>
<path d="M514.4,57.9h2.2l-1.1,1.4z" fill="#444" />
<text x="555.5" y="60.6" font-size="4.7" fill="#4a4a4a" text-anchor="middle" textLength="18.3" lengthAdjust="spacingAndGlyphs" >INSERT</text>
<path d="M565.9,57.9h2.2l-1.1,1.4z" fill="#444" />
<text x="604.2" y="60.6" font-size="4.7" fill="#4a4a4a" text-anchor="middle" textLength="18.3" lengthAdjust="spacingAndGlyphs" >SELECT</text>
<path d="M614.6,57.9h2.2l-1.1,1.4z" fill="#444" />
<g transform="translate(68.9,46.2) scale(1.2)">
<rect x="-5.0" y="-5.5" width="9.0" height="9.5" fill="#fff" stroke="#777" stroke-width="0.5" stroke-dasharray="1 0.6"/>
<path d="M-2.6,2.2v-5.2h4.3l-1.8,2.4" fill="none" stroke="#777" stroke-width="0.6" />
<path d="M3.6,0.4v5.4M0.9,3.1h5.4" fill="none" stroke="#27a045" stroke-width="1.4" />
</g>
<g transform="translate(86.3,46.2) scale(1.2)">
<path d="M-5.4,-3.2l2,-2h7v8.6l-2,2.4h-7z" fill="#4a9fe0" />
<path d="M-5.4,-3.2l2,-2h7l-2,2z" fill="#8cc4ee" />
<path d="M1.6,-3.2l2,-2v8.6l-2,2.4z" fill="#2f86cf" />
<path d="M5.8,-5.6v10.6" fill="none" stroke="#555" stroke-width="0.5" />
</g>
<g transform="translate(104.7,46.2) scale(1.2)">
<path d="M-6,-1.6c2.6,-3 9.6,-3 12.2,0v4.8c-0.6,0.9 -1.6,1.4 -2.8,1.6v-2.6c-1.6,-1.4 -5,-1.4 -6.6,0v2.6c-1.2,-0.2 -2.2,-0.7 -2.8,-1.6z" fill="#4a9fe0" />
<path d="M-6,-1.6c2.6,-3 9.6,-3 12.2,0c-2.6,-1.6 -9.6,-1.6 -12.2,0z" fill="#8cc4ee" />
<path d="M-4.2,-4.6c2.6,-1.2 6.4,-1.2 8.8,0" fill="none" stroke="#666" stroke-width="0.5" />
</g>
<g transform="translate(123.7,46.2) scale(1.2)">
<path d="M-5.6,-3.6l1.8,-1.9h9v8.8l-1.8,2.2h-9z" fill="#d9d9d9" stroke="#aaa" stroke-width="0.4" />
<path d="M3.4,-3.6l1.8,-1.9v8.8l-1.8,2.2z" fill="#bcbcbc" />
<circle cx="-1.1" cy="1.0" r="3.2" fill="#f4f4f4" stroke="#9a9a9a" stroke-width="0.4"/>
<path d="M-1.1,1l-2.6,-1.8a3.2,3.2 0 0 1 5.6,0.6c0.4,1.6 -0.4,3 -1.6,3.8z" fill="#4a9fe0" />
</g>
<g transform="translate(142.1,46.2) scale(1.2)">
<path d="M-3.6,-3.6h7.4M-3.6,-3.6v7.4M-3.6,3.8h7.4" fill="none" stroke="#9a9a9a" stroke-width="0.5" />
<circle cx="-3.6" cy="-3.6" r="1.3" fill="#fff" stroke="#888" stroke-width="0.5"/>
<rect x="2.4" y="-5.0" width="2.8" height="2.8" fill="#3f8fc8" />
<rect x="-5.0" y="2.4" width="2.8" height="2.8" fill="#3f8fc8" />
<rect x="2.4" y="2.4" width="2.8" height="2.8" fill="#3f8fc8" />
</g>
<g transform="translate(159.3,46.2) scale(1.2)">
<path d="M-5.6,-1.2c0.4,-3.6 4.6,-5.2 7.6,-3.6c3.2,0.6 4.2,4 3.2,6.6c-0.9,2.8 -3.8,3.8 -6.4,3.4c-2.6,0.2 -4.6,-1.2 -4.4,-3.4z" fill="#9b5fd0" />
<path d="M-5.6,-1.2c0.4,-3.6 4.6,-5.2 7.6,-3.6c-1.4,1.6 -5,2.6 -7.6,3.6z" fill="#b98ae0" />
<path d="M2.4,-0.8c1.6,0 2.8,0.4 2.8,0.4c0,2.8 -0.6,4.2 -2.8,5.4z" fill="#5b3a8e" />
<circle cx="3.5" cy="-3.8" r="1.9" fill="#f4a020"/>
</g>
<g transform="translate(181.5,46.2) scale(1.2)">
<path d="M-6.4,-5h12.8v5.6l-2.6,4.4h-7.6l-2.6,-4.4z" fill="#2f86cf" />
<path d="M-4.4,-3.6h8.8l-2,6.2h-4.8z" fill="#7fc0ee" />
<circle cx="0.0" cy="3.0" r="2.7" fill="#fff" stroke="#888" stroke-width="0.4"/>
<path d="M-1.6,-3.4l0.9,4M1.6,-3.4l-0.9,4" fill="none" stroke="#fff" stroke-width="0.5" />
</g>
<g transform="translate(199.1,46.2) scale(1.2)">
<circle cx="0.0" cy="-4.6" r="1.35" fill="#3f95d8"/>
<circle cx="3.3" cy="-3.3" r="1.35" fill="#3f95d8"/>
<circle cx="4.6" cy="0.0" r="1.35" fill="#3f95d8"/>
<circle cx="3.3" cy="3.3" r="1.35" fill="#3f95d8"/>
<circle cx="0.0" cy="4.6" r="1.35" fill="#3f95d8"/>
<circle cx="-3.3" cy="3.3" r="1.35" fill="#3f95d8"/>
<circle cx="-4.6" cy="0.0" r="1.35" fill="#3f95d8"/>
<circle cx="-3.3" cy="-3.3" r="1.3" fill="#fff" stroke="#888" stroke-width="0.5"/>
</g>
<g transform="translate(223.1,46.2) scale(1.2)">
<path d="M-5.6,-4.6c1.2,-0.9 2.4,-0.9 3.2,-0.4v10.4c-1,0.6 -2.2,0.4 -3.2,-0.6z" fill="#d0d0d0" />
<path d="M-2.4,-5h4.2v3l-1,2.2l1,2.2v3h-4.2z" fill="#4a9fe0" />
<path d="M-0.2,-5h2v3l-1,2.2l1,2.2v3h-2z" fill="#2f86cf" />
<path d="M2.6,0.2h3M4.2,-0.8l-1.6,1l1.6,1z" fill="#333" stroke="#333" stroke-width="0.5" />
</g>
<g transform="translate(243.3,46.2) scale(1.2)">
<path d="M-5.6,-1.6c0,-2.4 2,-4.2 4.4,-4.2h3c2.4,0 4.4,2 4.4,4.4v4l-2,2.6h-9.8z" fill="#d8d8d8" stroke="#b0b0b0" stroke-width="0.4" />
<path d="M-1.8,-5.6h2.6c3,0 5.4,2 5.4,5v1.6l-3,1.4c0,-3.4 -1.6,-5.6 -6.4,-5.8z" fill="#4a9fe0" />
</g>
<g transform="translate(262.2,46.2) scale(1.2)">
<path d="M-5.6,-1.2l3.6,-4.4h3l5.2,4.4v4.2l-2,2.6h-9.8z" fill="#d8d8d8" stroke="#b0b0b0" stroke-width="0.4" />
<path d="M-1.6,-5.6h2.6l5.2,4.4v2l-2.4,1.4l-6.6,-6z" fill="#4a9fe0" />
</g>
<g transform="translate(280.6,46.2) scale(1.2)">
<path d="M-5.6,-3.6l1.8,-1.9h9.2v8.8l-1.8,2.2h-9.2z" fill="#dcdcdc" stroke="#aaa" stroke-width="0.4" />
<path d="M3.6,-3.6l1.8,-1.9v8.8l-1.8,2.2z" fill="#c0c0c0" />
<rect x="-4.4" y="-2.4" width="6.8" height="6.8" fill="#f2f2f2" stroke="#aaa" stroke-width="0.3" />
<path d="M-3.6,-1.4h2.4v2.6h2.6v2.4h-5z" fill="#2f86cf" />
</g>
<g transform="translate(298.8,46.2) scale(1.2)">
<path d="M-1.6,-5.4h7.4v6.4l-1.4,1.6h-6z" fill="#4a9fe0" />
<path d="M-1.6,-5.4h7.4l-1.4,1.4h-6z" fill="#8cc4ee" />
<path d="M-6,-0.8l1.4,-1.4h6v6.2l-1.4,1.6h-6z" fill="#4a9fe0" />
<path d="M-6,-0.8l1.4,-1.4h6l-1.4,1.4z" fill="#8cc4ee" />
<path d="M0,-0.8l1.4,-1.4v6.2l-1.4,1.6z" fill="#2f86cf" />
</g>
<g transform="translate(316.5,46.2) scale(1.2)">
<path d="M-5.8,-3.4l1.6,-2h10v3.6l-1.6,2h-10z" fill="#4a9fe0" />
<path d="M-5.8,-3.4l1.6,-2h10l-1.6,2z" fill="#8cc4ee" />
<path d="M-5.8,0.2h10l1.6,-2v5l-1.6,2.2h-10z" fill="#d2d2d2" />
<path d="M-5.8,1.9h10M-5.8,3.6h10M-2.6,0.2v5.2M0.8,0.2v5.2" fill="none" stroke="#aaa" stroke-width="0.35" />
</g>
<g transform="translate(337.7,46.2) scale(1.2)">
<path d="M0,-6.2l1.8,2.2h-1.2v3.4h3.4v-1.2l2.2,1.8l-2.2,1.8v-1.2h-3.4v3.4h1.2l-1.8,2.2l-1.8,-2.2h1.2v-3.4h-3.4v1.2l-2.2,-1.8l2.2,-1.8v1.2h3.4v-3.4h-1.2z" fill="#1a1a1a" />
</g>
<g transform="translate(360.4,46.2) scale(1.2)">
<path d="M-5.4,-3.8h7.4v4.6h-7.4z" fill="#4a9fe0" />
<path d="M-5.4,-3.8l1,-1.2h7.4l-1,1.2z" fill="#8cc4ee" />
<path d="M-5.4,0.8h9.6v4.6h-9.6z" fill="#d6d6d6" stroke="#aaa" stroke-width="0.3" />
<path d="M-2.2,0.8v4.6M1,0.8v4.6M-5.4,3.1h9.6" fill="none" stroke="#aaa" stroke-width="0.35" />
<circle cx="4.0" cy="-3.6" r="2" fill="#f4a020"/>
</g>
<g transform="translate(380.6,46.2) scale(1.2)">
<path d="M-5.4,4.6v-6c0,-2.4 1.2,-4 2.8,-4l1.2,3.6l-1.4,3.8z" fill="#c9c9c9" stroke="#999" stroke-width="0.4" />
<path d="M-0.6,-5l1,3l-0.6,5.2" fill="none" stroke="#999" stroke-width="0.5" />
<path d="M1.4,0.6l2,-4.4c1.4,0.6 2.2,2 2.2,3.8v5h-2.2z" fill="#c9c9c9" stroke="#999" stroke-width="0.4" />
</g>
<g transform="translate(408.3,46.2) scale(1.2)">
<rect x="-6.0" y="-4.0" width="10.6" height="9.6" fill="#eeeeee" stroke="#bdbdbd" stroke-width="0.4" />
<path d="M-6,-0.8h10.6M-6,2.4h10.6M-2.4,-4v9.6M1.2,-4v9.6" fill="none" stroke="#c4c4c4" stroke-width="0.35" />
<circle cx="3.2" cy="-3.0" r="2.7" fill="#1f86d8"/>
<circle cx="3.4" cy="-3.0" r="1" fill="#cfe7fa"/>
</g>
<g transform="translate(426.0,46.2) scale(1.2)">
<rect x="-6.0" y="-4.0" width="10.6" height="9.6" fill="#eeeeee" stroke="#bdbdbd" stroke-width="0.4" />
<path d="M-6,-0.8h10.6M-6,2.4h10.6M-2.4,-4v9.6M1.2,-4v9.6" fill="none" stroke="#c4c4c4" stroke-width="0.35" />
<circle cx="3.2" cy="-3.0" r="2.7" fill="#1f86d8"/>
<circle cx="3.4" cy="-3.0" r="1" fill="#cfe7fa"/>
</g>
<g transform="translate(461.3,45.4) scale(1.2)">
<path d="M-5.4,-2.6l4.6,-3.6v9l-4.6,3.6z" fill="#4cb06a" stroke="#888" stroke-width="0.3" />
<path d="M-3.6,-1.6l2.8,-2.2v7l-2.8,2.2z" fill="#e9f4ec" />
<path d="M1,-2.2l4.6,-3.6v9l-4.6,3.6z" fill="#f08a3c" />
</g>
<g transform="translate(496.2,46.2) scale(1.2)">
<path d="M-6,-2.6h12M-6,-4.4v3.6M6,-4.4v3.6" fill="none" stroke="#9a9a9a" stroke-width="0.5" />
<rect x="-6.0" y="0.6" width="12.0" height="2.6" fill="#f3a224" />
</g>
<g transform="translate(515.1,46.2) scale(1.2)">
<rect x="-5.6" y="-5.4" width="11.2" height="10.8" fill="#f4f8fc" stroke="#a9c6e0" stroke-width="0.5" />
<rect x="-5.6" y="-5.4" width="5.2" height="10.8" fill="#9fcbf0" />
<path d="M-0.4,-5.4v10.8M-5.6,0h11.2" fill="none" stroke="#a9c6e0" stroke-width="0.5" />
</g>
<g transform="translate(539.6,46.2) scale(1.2)">
<path d="M-5.6,-5.4h9.6v3h-2.8v7.6h-4.2v-7.6h-2.6z" fill="#2f86cf" />
<path d="M3.2,0.6v5.2M0.6,3.2h5.2" fill="none" stroke="#27a045" stroke-width="1.4" />
</g>
<g transform="translate(558.0,46.2) scale(1.2)">
<rect x="-5.8" y="-5.2" width="11.6" height="10.4" fill="#3f95d8" />
<path d="M-5.8,5.2v-3l3.2,-3.4l3,3l2.2,-1.8l3.2,3v2.2z" fill="#9fd0f4" />
<circle cx="2.8" cy="-2.4" r="1.2" fill="#d6ecfb"/>
</g>
<g transform="translate(577.0,46.2) scale(1.2)">
<path d="M-2.4,-5.6h6l2.2,2.2v9h-8.2z" fill="#fff" stroke="#bbb" stroke-width="0.4" />
<path d="M3.6,-5.6l2.2,2.2h-2.2z" fill="#f3a224" />
<path d="M-6.4,-2.4h4v-1.6l3,2.4l-3,2.4v-1.6h-4z" fill="#2f86cf" />
<rect x="-3.4" y="1.4" width="9.2" height="4.2" fill="#e8871f" />
<rect x="-2.4" y="2.4" width="2.0" height="2.2" fill="#fbe3c4" />
<rect x="2.6" y="2.4" width="2.0" height="2.2" fill="#fbe3c4" />
</g>
<g transform="translate(605.2,46.2) scale(1.2)">
<rect x="-6.6" y="-5.6" width="11.0" height="9.0" fill="none" stroke="#9a9a9a" stroke-width="0.5" stroke-dasharray="1.2 0.7"/>
<path d="M3.2,0.6v5.6l1.3,-1.2l1,2l0.8,-0.4l-1,-2h1.8z" fill="#fff" stroke="#444" stroke-width="0.5" />
</g>
<rect x="2.5" y="67.2" width="131.2" height="10.0" fill="#ececec" stroke="#e0e0e0" stroke-width="0.4" />
<path d="M5.2,72.3l1.8,-1.3v2.6zM7.6,71.1v2.4" fill="#444" stroke="#444" stroke-width="0.5" />
<text x="13.1" y="74.0" font-size="4.9" fill="#707070" text-anchor="start" textLength="24.8" lengthAdjust="spacingAndGlyphs" >BROWSER</text>
<circle cx="126.0" cy="72.2" r="2.2" fill="#2a2a2a"/>
<path d="M125,72.2h2" fill="none" stroke="#fff" stroke-width="0.5" />
<path d="M13.0,82.7v4h-4z" fill="#444" />
<path d="M19.7,84.7c1.4,-2.2 4.6,-2.2 6,0c-1.4,2.2 -4.6,2.2 -6,0z" fill="#fff" stroke="#555" stroke-width="0.5" />
<circle cx="22.7" cy="84.7" r="1.05" fill="#555"/>
<rect x="29.0" y="80.4" width="92.0" height="8.6" fill="#8a8a8a" rx="0.8" />
<path d="M31.6,81.9h2.6l1.4,1.4v4.2h-4z" fill="#fff" />
<path d="M32.6,85.9v-1.6h1.6" fill="none" stroke="#777" stroke-width="0.4" />
<text x="43.0" y="86.5" font-size="4.9" fill="#fff" text-anchor="start" textLength="74.0" lengthAdjust="spacingAndGlyphs" font-weight="bold" >digital_twin_enabled_smart_s...</text>
<circle cx="126.0" cy="84.7" r="2.5" fill="#fff" stroke="#555" stroke-width="0.5"/>
<circle cx="126.0" cy="84.7" r="1" fill="#555"/>
<rect x="26.3" y="91.0" width="57.7" height="8.5" fill="#f0f0f0" rx="0.8" />
<path d="M18.2,93.1l3.2,2.2l-3.2,2.2z" fill="#fff" stroke="#4a4a4a" stroke-width="0.7" />
<circle cx="30.3" cy="95.3" r="2.1" fill="#555"/>
<circle cx="30.3" cy="95.3" r="0.8" fill="#fff"/>
<text x="38.5" y="97.0" font-size="4.9" fill="#5a5a5a" text-anchor="start" textLength="42.0" lengthAdjust="spacingAndGlyphs" >Document Settings</text>
<rect x="26.3" y="101.5" width="47.5" height="8.5" fill="#f0f0f0" rx="0.8" />
<path d="M18.2,103.6l3.2,2.2l-3.2,2.2z" fill="#fff" stroke="#4a4a4a" stroke-width="0.7" />
<path d="M27.5,103.6h2l0.6,0.7h3v3.8h-5.6z" fill="#7d7d7d" />
<text x="40.7" y="107.5" font-size="4.9" fill="#5a5a5a" text-anchor="start" textLength="29.6" lengthAdjust="spacingAndGlyphs" >Named Views</text>
<rect x="26.3" y="112.1" width="41.7" height="8.5" fill="#f0f0f0" rx="0.8" />
<path d="M18.2,114.2l3.2,2.2l-3.2,2.2z" fill="#fff" stroke="#4a4a4a" stroke-width="0.7" />
<path d="M27.3,116.4c1.4,-2.2 4.6,-2.2 6,0c-1.4,2.2 -4.6,2.2 -6,0z" fill="#f4f4f4" stroke="#bdbdbd" stroke-width="0.5" />
<circle cx="30.3" cy="116.4" r="1.05" fill="#bdbdbd"/>
<path d="M38.8,114.2h2l0.6,0.7h3v3.8h-5.6z" fill="#7d7d7d" />
<text x="51.7" y="118.1" font-size="4.9" fill="#5a5a5a" text-anchor="start" textLength="12.8" lengthAdjust="spacingAndGlyphs" >Origin</text>
<rect x="26.3" y="122.7" width="46.7" height="8.5" fill="#f0f0f0" rx="0.8" />
<path d="M18.2,124.8l3.2,2.2l-3.2,2.2z" fill="#fff" stroke="#4a4a4a" stroke-width="0.7" />
<path d="M27.3,127.0c1.4,-2.2 4.6,-2.2 6,0c-1.4,2.2 -4.6,2.2 -6,0z" fill="#fff" stroke="#555" stroke-width="0.5" />
<circle cx="30.3" cy="127.0" r="1.05" fill="#555"/>
<path d="M38.8,124.8h2l0.6,0.7h3v3.8h-5.6z" fill="#7d7d7d" />
<text x="51.7" y="128.7" font-size="4.9" fill="#5a5a5a" text-anchor="start" textLength="17.8" lengthAdjust="spacingAndGlyphs" >Analysis</text>
<rect x="26.3" y="133.3" width="48.3" height="8.5" fill="#f0f0f0" rx="0.8" />
<path d="M18.2,135.4l3.2,2.2l-3.2,2.2z" fill="#fff" stroke="#4a4a4a" stroke-width="0.7" />
<path d="M27.3,137.6c1.4,-2.2 4.6,-2.2 6,0c-1.4,2.2 -4.6,2.2 -6,0z" fill="#fff" stroke="#555" stroke-width="0.5" />
<circle cx="30.3" cy="137.6" r="1.05" fill="#555"/>
<path d="M38.8,135.4h2l0.6,0.7h3v3.8h-5.6z" fill="#7d7d7d" />
<text x="51.7" y="139.3" font-size="4.9" fill="#5a5a5a" text-anchor="start" textLength="19.4" lengthAdjust="spacingAndGlyphs" >Sketches</text>
<rect x="26.3" y="143.8" width="55.9" height="8.5" fill="#f0f0f0" rx="0.8" />
<path d="M18.2,145.9l3.2,2.2l-3.2,2.2z" fill="#fff" stroke="#4a4a4a" stroke-width="0.7" />
<path d="M27.3,148.1c1.4,-2.2 4.6,-2.2 6,0c-1.4,2.2 -4.6,2.2 -6,0z" fill="#fff" stroke="#555" stroke-width="0.5" />
<circle cx="30.3" cy="148.1" r="1.05" fill="#555"/>
<path d="M38.8,145.9h2l0.6,0.7h3v3.8h-5.6z" fill="#7d7d7d" />
<text x="51.7" y="149.8" font-size="4.9" fill="#5a5a5a" text-anchor="start" textLength="27.0" lengthAdjust="spacingAndGlyphs" >Construction</text>
<rect x="26.3" y="154.4" width="75.4" height="8.5" fill="#f0f0f0" rx="0.8" />
<path d="M18.2,156.5l3.2,2.2l-3.2,2.2z" fill="#fff" stroke="#4a4a4a" stroke-width="0.7" />
<path d="M27.3,158.7c1.4,-2.2 4.6,-2.2 6,0c-1.4,2.2 -4.6,2.2 -6,0z" fill="#f4f4f4" stroke="#bdbdbd" stroke-width="0.5" />
<circle cx="30.3" cy="158.7" r="1.05" fill="#bdbdbd"/>
<rect x="39.0" y="155.9" width="5.2" height="5.6" fill="#fff" stroke="#666" stroke-width="0.5" rx="0.6" />
<path d="M40.8,160.1v-1.8h1.8" fill="none" stroke="#666" stroke-width="0.45" />
<text x="51.7" y="160.4" font-size="4.9" fill="#5a5a5a" text-anchor="start" textLength="46.5" lengthAdjust="spacingAndGlyphs" >Platform_Main_First:1</text>
<rect x="26.3" y="165.0" width="81.9" height="8.5" fill="#f0f0f0" rx="0.8" />
<path d="M18.2,167.1l3.2,2.2l-3.2,2.2z" fill="#fff" stroke="#4a4a4a" stroke-width="0.7" />
<path d="M27.3,169.3c1.4,-2.2 4.6,-2.2 6,0c-1.4,2.2 -4.6,2.2 -6,0z" fill="#f4f4f4" stroke="#bdbdbd" stroke-width="0.5" />
<circle cx="30.3" cy="169.3" r="1.05" fill="#bdbdbd"/>
<rect x="39.0" y="166.5" width="5.2" height="5.6" fill="#fff" stroke="#666" stroke-width="0.5" rx="0.6" />
<path d="M40.8,170.7v-1.8h1.8" fill="none" stroke="#666" stroke-width="0.45" />
<text x="51.7" y="171.0" font-size="4.9" fill="#5a5a5a" text-anchor="start" textLength="53.0" lengthAdjust="spacingAndGlyphs" >Platform_Main_Second:1</text>
<rect x="26.3" y="175.5" width="90.4" height="8.5" fill="#f0f0f0" rx="0.8" />
<path d="M21.3,177.8v4h-4z" fill="#444" />
<path d="M27.3,179.8c1.4,-2.2 4.6,-2.2 6,0c-1.4,2.2 -4.6,2.2 -6,0z" fill="#fff" stroke="#555" stroke-width="0.5" />
<circle cx="30.3" cy="179.8" r="1.05" fill="#555"/>
<rect x="39.0" y="177.0" width="5.2" height="5.6" fill="#fff" stroke="#666" stroke-width="0.5" rx="0.6" />
<path d="M40.8,181.2v-1.8h1.8" fill="none" stroke="#666" stroke-width="0.45" />
<text x="51.7" y="181.5" font-size="4.9" fill="#5a5a5a" text-anchor="start" textLength="61.5" lengthAdjust="spacingAndGlyphs" >Transportation_Mechanism:1</text>
<rect x="34.4" y="186.1" width="41.7" height="8.5" fill="#f0f0f0" rx="0.8" />
<path d="M26.3,188.2l3.2,2.2l-3.2,2.2z" fill="#fff" stroke="#4a4a4a" stroke-width="0.7" />
<path d="M35.4,190.4c1.4,-2.2 4.6,-2.2 6,0c-1.4,2.2 -4.6,2.2 -6,0z" fill="#f4f4f4" stroke="#bdbdbd" stroke-width="0.5" />
<circle cx="38.4" cy="190.4" r="1.05" fill="#bdbdbd"/>
<path d="M46.9,188.2h2l0.6,0.7h3v3.8h-5.6z" fill="#7d7d7d" />
<text x="59.8" y="192.1" font-size="4.9" fill="#5a5a5a" text-anchor="start" textLength="12.8" lengthAdjust="spacingAndGlyphs" >Origin</text>
<rect x="34.4" y="196.7" width="43.5" height="8.5" fill="#f0f0f0" rx="0.8" />
<path d="M29.4,199.0v4h-4z" fill="#444" />
<path d="M35.4,201.0c1.4,-2.2 4.6,-2.2 6,0c-1.4,2.2 -4.6,2.2 -6,0z" fill="#fff" stroke="#555" stroke-width="0.5" />
<circle cx="38.4" cy="201.0" r="1.05" fill="#555"/>
<path d="M46.9,198.8h2l0.6,0.7h3v3.8h-5.6z" fill="#7d7d7d" />
<text x="59.8" y="202.7" font-size="4.9" fill="#5a5a5a" text-anchor="start" textLength="14.6" lengthAdjust="spacingAndGlyphs" >Bodies</text>
<rect x="42.5" y="207.3" width="39.5" height="8.5" fill="#f0f0f0" rx="0.8" />
<path d="M43.5,211.6c1.4,-2.2 4.6,-2.2 6,0c-1.4,2.2 -4.6,2.2 -6,0z" fill="#fff" stroke="#555" stroke-width="0.5" />
<circle cx="46.5" cy="211.6" r="1.05" fill="#555"/>
<rect x="55.2" y="208.8" width="5.2" height="5.6" fill="#fff" stroke="#777" stroke-width="0.5" rx="0.8" />
<path d="M56.8,212.8h1.6" fill="none" stroke="#888" stroke-width="0.4" />
<text x="67.9" y="213.3" font-size="4.9" fill="#5a5a5a" text-anchor="start" textLength="10.6" lengthAdjust="spacingAndGlyphs" >Road</text>
<rect x="42.5" y="217.8" width="58.7" height="8.5" fill="#f0f0f0" rx="0.8" />
<path d="M43.5,222.1c1.4,-2.2 4.6,-2.2 6,0c-1.4,2.2 -4.6,2.2 -6,0z" fill="#f4f4f4" stroke="#bdbdbd" stroke-width="0.5" />
<circle cx="46.5" cy="222.1" r="1.05" fill="#bdbdbd"/>
<rect x="55.2" y="219.3" width="5.2" height="5.6" fill="#fff" stroke="#777" stroke-width="0.5" rx="0.8" />
<path d="M56.8,223.3h1.6" fill="none" stroke="#888" stroke-width="0.4" />
<text x="67.9" y="223.8" font-size="4.9" fill="#5a5a5a" text-anchor="start" textLength="29.8" lengthAdjust="spacingAndGlyphs" >rack_template</text>
<rect x="42.5" y="228.4" width="72.9" height="8.5" fill="#f0f0f0" rx="0.8" />
<path d="M43.5,232.7c1.4,-2.2 4.6,-2.2 6,0c-1.4,2.2 -4.6,2.2 -6,0z" fill="#f4f4f4" stroke="#bdbdbd" stroke-width="0.5" />
<circle cx="46.5" cy="232.7" r="1.05" fill="#bdbdbd"/>
<rect x="55.2" y="229.9" width="5.2" height="5.6" fill="#fff" stroke="#777" stroke-width="0.5" rx="0.8" />
<path d="M56.8,233.9h1.6" fill="none" stroke="#888" stroke-width="0.4" />
<text x="67.9" y="234.4" font-size="4.9" fill="#5a5a5a" text-anchor="start" textLength="44.0" lengthAdjust="spacingAndGlyphs" >gear_connection_pin</text>
<rect x="42.5" y="239.0" width="64.5" height="8.5" fill="#f0f0f0" rx="0.8" />
<path d="M43.5,243.3c1.4,-2.2 4.6,-2.2 6,0c-1.4,2.2 -4.6,2.2 -6,0z" fill="#f4f4f4" stroke="#bdbdbd" stroke-width="0.5" />
<circle cx="46.5" cy="243.3" r="1.05" fill="#bdbdbd"/>
<rect x="55.2" y="240.5" width="5.2" height="5.6" fill="#fff" stroke="#777" stroke-width="0.5" rx="0.8" />
<path d="M56.8,244.5h1.6" fill="none" stroke="#888" stroke-width="0.4" />
<text x="67.9" y="245.0" font-size="4.9" fill="#5a5a5a" text-anchor="start" textLength="35.6" lengthAdjust="spacingAndGlyphs" >carrier_main_left</text>
<rect x="42.5" y="249.6" width="67.1" height="8.5" fill="#f0f0f0" rx="0.8" />
<path d="M43.5,253.9c1.4,-2.2 4.6,-2.2 6,0c-1.4,2.2 -4.6,2.2 -6,0z" fill="#f4f4f4" stroke="#bdbdbd" stroke-width="0.5" />
<circle cx="46.5" cy="253.9" r="1.05" fill="#bdbdbd"/>
<rect x="55.2" y="251.1" width="5.2" height="5.6" fill="#fff" stroke="#777" stroke-width="0.5" rx="0.8" />
<path d="M56.8,255.1h1.6" fill="none" stroke="#888" stroke-width="0.4" />
<text x="67.9" y="255.6" font-size="4.9" fill="#5a5a5a" text-anchor="start" textLength="38.2" lengthAdjust="spacingAndGlyphs" >carrier_main_right</text>
<rect x="42.5" y="260.1" width="53.5" height="8.5" fill="#f0f0f0" rx="0.8" />
<path d="M43.5,264.4c1.4,-2.2 4.6,-2.2 6,0c-1.4,2.2 -4.6,2.2 -6,0z" fill="#f4f4f4" stroke="#bdbdbd" stroke-width="0.5" />
<circle cx="46.5" cy="264.4" r="1.05" fill="#bdbdbd"/>
<rect x="55.2" y="261.6" width="5.2" height="5.6" fill="#fff" stroke="#777" stroke-width="0.5" rx="0.8" />
<path d="M56.8,265.6h1.6" fill="none" stroke="#888" stroke-width="0.4" />
<text x="67.9" y="266.1" font-size="4.9" fill="#5a5a5a" text-anchor="start" textLength="24.6" lengthAdjust="spacingAndGlyphs" >carrier_roof</text>
<rect x="42.5" y="270.7" width="53.5" height="8.5" fill="#f0f0f0" rx="0.8" />
<path d="M43.5,275.0c1.4,-2.2 4.6,-2.2 6,0c-1.4,2.2 -4.6,2.2 -6,0z" fill="#f4f4f4" stroke="#bdbdbd" stroke-width="0.5" />
<circle cx="46.5" cy="275.0" r="1.05" fill="#bdbdbd"/>
<rect x="55.2" y="272.2" width="5.2" height="5.6" fill="#fff" stroke="#777" stroke-width="0.5" rx="0.8" />
<path d="M56.8,276.2h1.6" fill="none" stroke="#888" stroke-width="0.4" />
<text x="67.9" y="276.7" font-size="4.9" fill="#5a5a5a" text-anchor="start" textLength="24.6" lengthAdjust="spacingAndGlyphs" >carrier_arm</text>
<rect x="34.4" y="281.3" width="48.3" height="8.5" fill="#f0f0f0" rx="0.8" />
<path d="M26.3,283.4l3.2,2.2l-3.2,2.2z" fill="#fff" stroke="#4a4a4a" stroke-width="0.7" />
<path d="M35.4,285.6c1.4,-2.2 4.6,-2.2 6,0c-1.4,2.2 -4.6,2.2 -6,0z" fill="#f4f4f4" stroke="#bdbdbd" stroke-width="0.5" />
<circle cx="38.4" cy="285.6" r="1.05" fill="#bdbdbd"/>
<path d="M46.9,283.4h2l0.6,0.7h3v3.8h-5.6z" fill="#7d7d7d" />
<text x="59.8" y="287.3" font-size="4.9" fill="#5a5a5a" text-anchor="start" textLength="19.4" lengthAdjust="spacingAndGlyphs" >Sketches</text>
<rect x="34.4" y="291.8" width="55.9" height="8.5" fill="#f0f0f0" rx="0.8" />
<path d="M26.3,293.9l3.2,2.2l-3.2,2.2z" fill="#fff" stroke="#4a4a4a" stroke-width="0.7" />
<path d="M35.4,296.1c1.4,-2.2 4.6,-2.2 6,0c-1.4,2.2 -4.6,2.2 -6,0z" fill="#fff" stroke="#555" stroke-width="0.5" />
<circle cx="38.4" cy="296.1" r="1.05" fill="#555"/>
<path d="M46.9,293.9h2l0.6,0.7h3v3.8h-5.6z" fill="#7d7d7d" />
<text x="59.8" y="297.8" font-size="4.9" fill="#5a5a5a" text-anchor="start" textLength="27.0" lengthAdjust="spacingAndGlyphs" >Construction</text>
<rect x="34.4" y="302.4" width="96.4" height="8.5" fill="#f0f0f0" rx="0.8" />
<path d="M26.3,304.5l3.2,2.2l-3.2,2.2z" fill="#fff" stroke="#4a4a4a" stroke-width="0.7" />
<path d="M35.4,306.7c1.4,-2.2 4.6,-2.2 6,0c-1.4,2.2 -4.6,2.2 -6,0z" fill="#f4f4f4" stroke="#bdbdbd" stroke-width="0.5" />
<circle cx="38.4" cy="306.7" r="1.05" fill="#bdbdbd"/>
<rect x="47.1" y="303.9" width="5.2" height="5.6" fill="#fff" stroke="#666" stroke-width="0.5" rx="0.6" />
<path d="M48.9,308.1v-1.8h1.8" fill="none" stroke="#666" stroke-width="0.45" />
<text x="59.8" y="308.4" font-size="4.9" fill="#5a5a5a" text-anchor="start" textLength="67.5" lengthAdjust="spacingAndGlyphs" >Adjustment_Gear_1 (24 teeth):1</text>
<rect x="34.4" y="313.0" width="81.9" height="8.5" fill="#f0f0f0" rx="0.8" />
<path d="M26.3,315.1l3.2,2.2l-3.2,2.2z" fill="#fff" stroke="#4a4a4a" stroke-width="0.7" />
<path d="M35.4,317.3c1.4,-2.2 4.6,-2.2 6,0c-1.4,2.2 -4.6,2.2 -6,0z" fill="#f4f4f4" stroke="#bdbdbd" stroke-width="0.5" />
<circle cx="38.4" cy="317.3" r="1.05" fill="#bdbdbd"/>
<rect x="47.1" y="314.5" width="5.2" height="5.6" fill="#fff" stroke="#666" stroke-width="0.5" rx="0.6" />
<path d="M48.9,318.7v-1.8h1.8" fill="none" stroke="#666" stroke-width="0.45" />
<text x="59.8" y="319.0" font-size="4.9" fill="#5a5a5a" text-anchor="start" textLength="53.0" lengthAdjust="spacingAndGlyphs" >Carrier_Gear (24 teeth):1</text>
<rect x="34.4" y="323.6" width="82.4" height="8.5" fill="#f0f0f0" rx="0.8" />
<path d="M26.3,325.7l3.2,2.2l-3.2,2.2z" fill="#fff" stroke="#4a4a4a" stroke-width="0.7" />
<path d="M35.4,327.9c1.4,-2.2 4.6,-2.2 6,0c-1.4,2.2 -4.6,2.2 -6,0z" fill="#f4f4f4" stroke="#bdbdbd" stroke-width="0.5" />
<circle cx="38.4" cy="327.9" r="1.05" fill="#bdbdbd"/>
<rect x="47.1" y="325.1" width="5.2" height="5.6" fill="#fff" stroke="#666" stroke-width="0.5" rx="0.6" />
<path d="M48.9,329.3v-1.8h1.8" fill="none" stroke="#666" stroke-width="0.45" />
<text x="59.8" y="329.6" font-size="4.9" fill="#5a5a5a" text-anchor="start" textLength="53.5" lengthAdjust="spacingAndGlyphs" >Carrier_Gear (24 teeth):2</text>
<rect x="34.4" y="334.1" width="70.4" height="8.5" fill="#f0f0f0" rx="0.8" />
<path d="M26.3,336.2l3.2,2.2l-3.2,2.2z" fill="#fff" stroke="#4a4a4a" stroke-width="0.7" />
<path d="M35.4,338.4c1.4,-2.2 4.6,-2.2 6,0c-1.4,2.2 -4.6,2.2 -6,0z" fill="#f4f4f4" stroke="#bdbdbd" stroke-width="0.5" />
<circle cx="38.4" cy="338.4" r="1.05" fill="#bdbdbd"/>
<rect x="47.1" y="335.6" width="5.2" height="5.6" fill="#fff" stroke="#666" stroke-width="0.5" rx="0.6" />
<path d="M48.9,339.8v-1.8h1.8" fill="none" stroke="#666" stroke-width="0.45" />
<text x="59.8" y="340.1" font-size="4.9" fill="#5a5a5a" text-anchor="start" textLength="41.5" lengthAdjust="spacingAndGlyphs" >Carrier_Bearing_1:1</text>
<rect x="34.4" y="344.7" width="70.4" height="8.5" fill="#f0f0f0" rx="0.8" />
<path d="M26.3,346.8l3.2,2.2l-3.2,2.2z" fill="#fff" stroke="#4a4a4a" stroke-width="0.7" />
<path d="M35.4,349.0c1.4,-2.2 4.6,-2.2 6,0c-1.4,2.2 -4.6,2.2 -6,0z" fill="#f4f4f4" stroke="#bdbdbd" stroke-width="0.5" />
<circle cx="38.4" cy="349.0" r="1.05" fill="#bdbdbd"/>
<rect x="47.1" y="346.2" width="5.2" height="5.6" fill="#fff" stroke="#666" stroke-width="0.5" rx="0.6" />
<path d="M48.9,350.4v-1.8h1.8" fill="none" stroke="#666" stroke-width="0.45" />
<text x="59.8" y="350.7" font-size="4.9" fill="#5a5a5a" text-anchor="start" textLength="41.5" lengthAdjust="spacingAndGlyphs" >Carrier_Bearing_2:1</text>
<rect x="34.4" y="355.3" width="85.4" height="8.5" fill="#f0f0f0" rx="0.8" />
<path d="M26.3,357.4l3.2,2.2l-3.2,2.2z" fill="#fff" stroke="#4a4a4a" stroke-width="0.7" />
<path d="M35.4,359.6c1.4,-2.2 4.6,-2.2 6,0c-1.4,2.2 -4.6,2.2 -6,0z" fill="#f4f4f4" stroke="#bdbdbd" stroke-width="0.5" />
<circle cx="38.4" cy="359.6" r="1.05" fill="#bdbdbd"/>
<rect x="47.1" y="356.8" width="5.2" height="5.6" fill="#fff" stroke="#666" stroke-width="0.5" rx="0.6" />
<path d="M48.9,361.0v-1.8h1.8" fill="none" stroke="#666" stroke-width="0.45" />
<text x="59.8" y="361.3" font-size="4.9" fill="#5a5a5a" text-anchor="start" textLength="56.5" lengthAdjust="spacingAndGlyphs" >Direction_Gear (12 teeth):1</text>
<rect x="34.4" y="365.8" width="97.8" height="8.5" fill="#f0f0f0" rx="0.8" />
<path d="M26.3,367.9l3.2,2.2l-3.2,2.2z" fill="#fff" stroke="#4a4a4a" stroke-width="0.7" />
<path d="M35.4,370.1c1.4,-2.2 4.6,-2.2 6,0c-1.4,2.2 -4.6,2.2 -6,0z" fill="#f4f4f4" stroke="#bdbdbd" stroke-width="0.5" />
<circle cx="38.4" cy="370.1" r="1.05" fill="#bdbdbd"/>
<rect x="47.1" y="367.3" width="5.2" height="5.6" fill="#fff" stroke="#666" stroke-width="0.5" rx="0.6" />
<path d="M48.9,371.5v-1.8h1.8" fill="none" stroke="#666" stroke-width="0.45" />
<g transform="translate(60.6,370.1) rotate(-40)">
<rect x="-3.6" y="-1.3" width="4.2" height="2.6" fill="none" stroke="#2e2e2e" stroke-width="0.8" rx="1.3" />
<rect x="-0.6" y="-1.3" width="4.2" height="2.6" fill="none" stroke="#2e2e2e" stroke-width="0.8" rx="1.3" />
</g>
<text x="71.2" y="371.8" font-size="4.9" fill="#5a5a5a" text-anchor="start" textLength="54.5" lengthAdjust="spacingAndGlyphs" >17HS3401_Usongshine v...</text>
<rect x="34.4" y="376.4" width="97.8" height="8.5" fill="#f0f0f0" rx="0.8" />
<path d="M26.3,378.5l3.2,2.2l-3.2,2.2z" fill="#fff" stroke="#4a4a4a" stroke-width="0.7" />
<path d="M35.4,380.7c1.4,-2.2 4.6,-2.2 6,0c-1.4,2.2 -4.6,2.2 -6,0z" fill="#f4f4f4" stroke="#bdbdbd" stroke-width="0.5" />
<circle cx="38.4" cy="380.7" r="1.05" fill="#bdbdbd"/>
<rect x="47.1" y="377.9" width="5.2" height="5.6" fill="#fff" stroke="#666" stroke-width="0.5" rx="0.6" />
<path d="M48.9,382.1v-1.8h1.8" fill="none" stroke="#666" stroke-width="0.45" />
<g transform="translate(60.6,380.7) rotate(-40)">
<rect x="-3.6" y="-1.3" width="4.2" height="2.6" fill="none" stroke="#2e2e2e" stroke-width="0.8" rx="1.3" />
<rect x="-0.6" y="-1.3" width="4.2" height="2.6" fill="none" stroke="#2e2e2e" stroke-width="0.8" rx="1.3" />
</g>
<text x="71.2" y="382.4" font-size="4.9" fill="#5a5a5a" text-anchor="start" textLength="54.5" lengthAdjust="spacingAndGlyphs" >17HS3401_Usongshine v...</text>
<rect x="26.3" y="387.0" width="69.9" height="8.5" fill="#f0f0f0" rx="0.8" />
<path d="M18.2,389.1l3.2,2.2l-3.2,2.2z" fill="#fff" stroke="#4a4a4a" stroke-width="0.7" />
<path d="M27.3,391.3c1.4,-2.2 4.6,-2.2 6,0c-1.4,2.2 -4.6,2.2 -6,0z" fill="#f4f4f4" stroke="#bdbdbd" stroke-width="0.5" />
<circle cx="30.3" cy="391.3" r="1.05" fill="#bdbdbd"/>
<rect x="39.0" y="388.5" width="5.2" height="5.6" fill="#fff" stroke="#666" stroke-width="0.5" rx="0.6" />
<path d="M40.8,392.7v-1.8h1.8" fill="none" stroke="#666" stroke-width="0.45" />
<text x="51.7" y="393.0" font-size="4.9" fill="#5a5a5a" text-anchor="start" textLength="41.0" lengthAdjust="spacingAndGlyphs" >Product_Samples:1</text>
<rect x="2.5" y="520.0" width="131.2" height="10.2" fill="#ececec" stroke="#e0e0e0" stroke-width="0.4" />
<text x="13.1" y="526.9" font-size="4.9" fill="#707070" text-anchor="start" textLength="28.0" lengthAdjust="spacingAndGlyphs" >COMMENTS</text>
<circle cx="126.0" cy="525.2" r="2.2" fill="#2a2a2a"/>
<path d="M125,525.2h2M126,524.2v2" fill="none" stroke="#fff" stroke-width="0.5" />
<path d="M269.8,520.6v7.2M266.2,524.2h7.2" fill="none" stroke="#777" stroke-width="0.6" />
<circle cx="269.8" cy="524.2" r="1.8" fill="none" stroke="#777" stroke-width="0.5"/>
<path d="M275.2,523.7h1.8l-0.9,1.2z" fill="#444" />
<rect x="280.6" y="522.0" width="6.2" height="4.4" fill="#bbb" stroke="#666" stroke-width="0.5" />
<path d="M281.4,527.4h4.6" fill="none" stroke="#666" stroke-width="0.6" />
<circle cx="283.7" cy="524.2" r="1.1" fill="#666"/>
<rect x="290.6" y="518.6" width="11.4" height="11.2" fill="#1f7fd1" />
<path d="M293.6,524.6v-2.4c0,-0.6 0.9,-0.6 0.9,0v-1.2c0,-0.6 0.9,-0.6 0.9,0v-0.4c0,-0.6 0.9,-0.6 0.9,0v0.6c0,-0.6 0.9,-0.6 0.9,0v3l0.9,-0.9c0.5,-0.4 1,0 0.7,0.5l-1.6,2.6c-0.6,1 -1.2,1.4 -2.2,1.4h-0.6c-1.2,0 -1.8,-0.9 -1.8,-2z" fill="#fff" />
<circle cx="305.6" cy="523.4" r="2" fill="none" stroke="#666" stroke-width="0.6"/>
<path d="M307,525l1.8,1.8" fill="none" stroke="#666" stroke-width="0.8" />
<path d="M308.6,521.2h1.8M309.5,520.3v1.8" fill="none" stroke="#666" stroke-width="0.4" />
<circle cx="319.0" cy="523.6" r="2.2" fill="none" stroke="#666" stroke-width="0.6"/>
<path d="M320.6,525.2l1.8,1.8" fill="none" stroke="#666" stroke-width="0.8" />
<path d="M324.2,523.7h1.8l-0.9,1.2z" fill="#444" />
<rect x="329.8" y="521.0" width="6.6" height="4.8" fill="#6aa3dc" stroke="#667" stroke-width="0.4" />
<path d="M331,527.4h3.8" fill="none" stroke="#555" stroke-width="0.7" />
<path d="M338.2,523.7h1.8l-0.9,1.2z" fill="#444" />
<rect x="342.8" y="521.0" width="7.0" height="6.0" fill="#a6a6a6" stroke="#888" stroke-width="0.4" />
<path d="M342.6,523h7.2M342.6,525h7.2" fill="none" stroke="#c4c4c4" stroke-width="0.4" />
<path d="M351.4,523.7h1.8l-0.9,1.2z" fill="#444" />
<rect x="356.8" y="521.0" width="7.2" height="6.0" fill="#5f9bda" stroke="#4a7fb8" stroke-width="0.4" />
<path d="M360.3,521v6.2M356.6,524.1h7.4" fill="none" stroke="#e4eef8" stroke-width="0.5" />
<path d="M365.6,523.7h1.8l-0.9,1.2z" fill="#444" />
<rect x="0.0" y="532.3" width="634.0" height="22.7" fill="#f0f0f0" />
<path d="M0,532.3h634" fill="none" stroke="#e0e0e0" stroke-width="0.5" />
<text x="3.2" y="535.6" font-size="3" fill="#888" text-anchor="start" >·······</text>
<path d="M5.6,542.5v4.6" fill="none" stroke="#333" stroke-width="0.8" />
<path d="M10,542.5v4.6l-3.4,-2.3z" fill="#333" />
<path d="M20,542.5v4.6l-3.6,-2.3z" fill="#333" />
<path d="M27,542.0v5.6l4.2,-2.8z" fill="#222" />
<path d="M38.6,542.5v4.6l3.6,-2.3z" fill="#333" />
<path d="M49.6,542.5v4.6l3.4,-2.3z" fill="#333" />
<path d="M54.0,542.5v4.6" fill="none" stroke="#333" stroke-width="0.8" />
<g transform="translate(68.1,543) scale(1.12)">
<rect x="-3.2" y="-3.0" width="6.2" height="6.0" fill="#fbfbfb" stroke="#c4c4c4" stroke-width="0.4" />
<path d="M-2,1.8l3.6,-3.8l1,1l-3.6,3.6z" fill="#f0a94a" />
<path d="M-2.2,-1.6h2.4M-2.2,-0.2h1.4" fill="none" stroke="#cfcfcf" stroke-width="0.4" />
</g>
<g transform="translate(78.7,543) scale(1.12)">
<path d="M-3.2,-2l1,-1h5.6v5l-1,1.2h-5.6z" fill="#3f95d8" />
<path d="M2.4,-2l1,-1v5l-1,1.2z" fill="#2a74b8" />
<path d="M-3.2,-2l1,-1h5.6l-1,1z" fill="#8cc4ee" />
</g>
<g transform="translate(89.3,543) scale(1.12)">
<rect x="-3.0" y="-2.8" width="6.0" height="5.8" fill="#fdf1e2" stroke="#e8912d" stroke-width="0.8" rx="1" />
</g>
<g transform="translate(99.8,543) scale(1.12)">
<rect x="-3.2" y="-3.0" width="6.2" height="6.0" fill="#fbfbfb" stroke="#c4c4c4" stroke-width="0.4" />
<path d="M-2,1.8l3.6,-3.8l1,1l-3.6,3.6z" fill="#f0a94a" />
<path d="M-2.2,-1.6h2.4M-2.2,-0.2h1.4" fill="none" stroke="#cfcfcf" stroke-width="0.4" />
</g>
<g transform="translate(110.4,543) scale(1.12)">
<path d="M-3.2,-2l1,-1h5.6v5l-1,1.2h-5.6z" fill="#3f95d8" />
<path d="M2.4,-2l1,-1v5l-1,1.2z" fill="#2a74b8" />
<path d="M-3.2,-2l1,-1h5.6l-1,1z" fill="#8cc4ee" />
</g>
<g transform="translate(121.0,543) scale(1.12)">
<rect x="-3.2" y="-3.0" width="6.2" height="6.0" fill="#fbfbfb" stroke="#c4c4c4" stroke-width="0.4" />
<path d="M-2,1.8l3.6,-3.8l1,1l-3.6,3.6z" fill="#f0a94a" />
<path d="M-2.2,-1.6h2.4M-2.2,-0.2h1.4" fill="none" stroke="#cfcfcf" stroke-width="0.4" />
</g>
<g transform="translate(131.6,543) scale(1.12)">
<path d="M-3.2,-2l1,-1h5.6v5l-1,1.2h-5.6z" fill="#3f95d8" />
<path d="M2.4,-2l1,-1v5l-1,1.2z" fill="#2a74b8" />
<path d="M-3.2,-2l1,-1h5.6l-1,1z" fill="#8cc4ee" />
</g>
<g transform="translate(142.2,543) scale(1.12)">
<rect x="-3.2" y="-3.0" width="6.2" height="6.0" fill="#e4e4e4" stroke="#9a9a9a" stroke-width="0.4" />
<path d="M-0.4,-3h3.4v3.4z" fill="#3f95d8" />
</g>
<g transform="translate(152.7,543) scale(1.12)">
<circle cx="0.0" cy="0.0" r="2.6" fill="none" stroke="#3f95d8" stroke-width="1.1"/>
</g>
<g transform="translate(163.3,543) scale(1.12)">
<rect x="-3.2" y="-3.0" width="6.2" height="6.0" fill="#fbfbfb" stroke="#c4c4c4" stroke-width="0.4" />
<path d="M-2,1.8l3.6,-3.8l1,1l-3.6,3.6z" fill="#f0a94a" />
<path d="M-2.2,-1.6h2.4M-2.2,-0.2h1.4" fill="none" stroke="#cfcfcf" stroke-width="0.4" />
</g>
<g transform="translate(173.9,543) scale(1.12)">
<path d="M-2.8,-3.2v6.6" fill="none" stroke="#9a9a9a" stroke-width="0.6" />
<rect x="-2.4" y="-3.2" width="5.4" height="3.4" fill="#3f8fd6" />
<rect x="-2.4" y="0.2" width="5.0" height="2.8" fill="#fafafa" stroke="#d4d4d4" stroke-width="0.3" />
</g>
<g transform="translate(184.5,543) scale(1.12)">
<path d="M-3.2,-2l1,-1h5.6v5l-1,1.2h-5.6z" fill="#3f95d8" />
<path d="M2.4,-2l1,-1v5l-1,1.2z" fill="#2a74b8" />
<path d="M-3.2,-2l1,-1h5.6l-1,1z" fill="#8cc4ee" />
</g>
<g transform="translate(195.1,543) scale(1.12)">
<rect x="-3.2" y="-3.0" width="6.2" height="6.0" fill="#fbfbfb" stroke="#c4c4c4" stroke-width="0.4" />
<path d="M-2,1.8l3.6,-3.8l1,1l-3.6,3.6z" fill="#f0a94a" />
<path d="M-2.2,-1.6h2.4M-2.2,-0.2h1.4" fill="none" stroke="#cfcfcf" stroke-width="0.4" />
</g>
<g transform="translate(205.6,543) scale(1.12)">
<path d="M-3.2,-2l1,-1h5.6v5l-1,1.2h-5.6z" fill="#3f95d8" />
<path d="M2.4,-2l1,-1v5l-1,1.2z" fill="#2a74b8" />
<path d="M-3.2,-2l1,-1h5.6l-1,1z" fill="#8cc4ee" />
</g>
<g transform="translate(216.2,543) scale(1.12)">
<path d="M-3.2,-2l1,-1h5.6v5l-1,1.2h-5.6z" fill="#3f95d8" />
<path d="M2.4,-2l1,-1v5l-1,1.2z" fill="#2a74b8" />
<path d="M-3.2,-2l1,-1h5.6l-1,1z" fill="#8cc4ee" />
</g>
<g transform="translate(226.8,543) scale(1.12)">
<path d="M-3,-1.6l2.2,-1.8v5l-2.2,1.8z" fill="#4cb06a" />
<path d="M-0.4,-1.6l1.6,-1.4v5l-1.6,1.4z" fill="#b5d65a" />
<path d="M1.4,-1.6l2,-1.6v5l-2,1.6z" fill="#f08a3c" />
</g>
<g transform="translate(237.4,543) scale(1.12)">
<rect x="-3.2" y="-3.0" width="6.2" height="6.0" fill="#fbfbfb" stroke="#c4c4c4" stroke-width="0.4" />
<path d="M-2,1.8l3.6,-3.8l1,1l-3.6,3.6z" fill="#f0a94a" />
<path d="M-2.2,-1.6h2.4M-2.2,-0.2h1.4" fill="none" stroke="#cfcfcf" stroke-width="0.4" />
</g>
<g transform="translate(248.0,543) scale(1.12)">
<rect x="-3.0" y="-2.8" width="6.0" height="5.8" fill="#fdf1e2" stroke="#e8912d" stroke-width="0.8" rx="1" />
</g>
<g transform="translate(258.5,543) scale(1.12)">
<rect x="-2.9" y="-0.5" width="1.4" height="1.4" fill="#777" />
<rect x="-0.7" y="-0.5" width="1.4" height="1.4" fill="#777" />
<rect x="1.5" y="-0.5" width="1.4" height="1.4" fill="#777" />
</g>
<g transform="translate(269.1,543) scale(1.12)">
<path d="M-2.8,-1.6v2.6c0,1.6 1.2,2.4 2.8,2.4s2.8,-0.8 2.8,-2.4v-1.4" fill="none" stroke="#a8a8a8" stroke-width="0.8" />
<path d="M0,-3v5" fill="none" stroke="#a8a8a8" stroke-width="0.7" />
<circle cx="0.0" cy="2.4" r="0.9" fill="#c4c4c4"/>
</g>
<g transform="translate(279.7,543) scale(1.12)">
<path d="M-2.8,-3.2v6.6" fill="none" stroke="#9a9a9a" stroke-width="0.6" />
<rect x="-2.4" y="-3.2" width="5.4" height="3.4" fill="#3f8fd6" />
<rect x="-2.4" y="0.2" width="5.0" height="2.8" fill="#fafafa" stroke="#d4d4d4" stroke-width="0.3" />
</g>
<g transform="translate(290.3,543) scale(1.12)">
<rect x="-2.9" y="-0.5" width="1.4" height="1.4" fill="#777" />
<rect x="-0.7" y="-0.5" width="1.4" height="1.4" fill="#777" />
<rect x="1.5" y="-0.5" width="1.4" height="1.4" fill="#777" />
</g>
<g transform="translate(300.9,543) scale(1.12)">
<path d="M-2.8,-1.6v2.6c0,1.6 1.2,2.4 2.8,2.4s2.8,-0.8 2.8,-2.4v-1.4" fill="none" stroke="#a8a8a8" stroke-width="0.8" />
<path d="M0,-3v5" fill="none" stroke="#a8a8a8" stroke-width="0.7" />
<circle cx="0.0" cy="2.4" r="0.9" fill="#c4c4c4"/>
</g>
<g transform="translate(311.4,543) scale(1.12)">
<rect x="-2.9" y="-0.5" width="1.4" height="1.4" fill="#777" />
<rect x="-0.7" y="-0.5" width="1.4" height="1.4" fill="#777" />
<rect x="1.5" y="-0.5" width="1.4" height="1.4" fill="#777" />
</g>
<g transform="translate(322.0,543) scale(1.12)">
<path d="M-2.8,-1.6v2.6c0,1.6 1.2,2.4 2.8,2.4s2.8,-0.8 2.8,-2.4v-1.4" fill="none" stroke="#a8a8a8" stroke-width="0.8" />
<path d="M0,-3v5" fill="none" stroke="#a8a8a8" stroke-width="0.7" />
<circle cx="0.0" cy="2.4" r="0.9" fill="#c4c4c4"/>
</g>
<g transform="translate(332.6,543) scale(1.12)">
<rect x="-2.9" y="-0.5" width="1.4" height="1.4" fill="#777" />
<rect x="-0.7" y="-0.5" width="1.4" height="1.4" fill="#777" />
<rect x="1.5" y="-0.5" width="1.4" height="1.4" fill="#777" />
</g>
<g transform="translate(343.2,543) scale(1.12)">
<path d="M-2.8,-1.6v2.6c0,1.6 1.2,2.4 2.8,2.4s2.8,-0.8 2.8,-2.4v-1.4" fill="none" stroke="#a8a8a8" stroke-width="0.8" />
<path d="M0,-3v5" fill="none" stroke="#a8a8a8" stroke-width="0.7" />
<circle cx="0.0" cy="2.4" r="0.9" fill="#c4c4c4"/>
</g>
<g transform="translate(353.8,543) scale(1.12)">
<path d="M0,-3.6l1.1,1.4h-0.7v1.8h1.8v-0.7l1.4,1.1l-1.4,1.1v-0.7h-1.8v1.8h0.7l-1.1,1.4l-1.1,-1.4h0.7v-1.8h-1.8v0.7l-1.4,-1.1l1.4,-1.1v0.7h1.8v-1.8h-0.7z" fill="#222" />
</g>
<g transform="translate(364.3,543) scale(1.12)">
<rect x="-3.0" y="-2.8" width="6.0" height="5.8" fill="#fdf1e2" stroke="#e8912d" stroke-width="0.8" rx="1" />
</g>
<g transform="translate(374.9,543) scale(1.12)">
<path d="M-2.8,-3.2v6.6" fill="none" stroke="#9a9a9a" stroke-width="0.6" />
<rect x="-2.4" y="-3.2" width="5.4" height="3.4" fill="#3f8fd6" />
<rect x="-2.4" y="0.2" width="5.0" height="2.8" fill="#fafafa" stroke="#d4d4d4" stroke-width="0.3" />
</g>
<g transform="translate(385.5,543) scale(1.12)">
<path d="M-2.8,-1.6v2.6c0,1.6 1.2,2.4 2.8,2.4s2.8,-0.8 2.8,-2.4v-1.4" fill="none" stroke="#a8a8a8" stroke-width="0.8" />
<path d="M0,-3v5" fill="none" stroke="#a8a8a8" stroke-width="0.7" />
<circle cx="0.0" cy="2.4" r="0.9" fill="#c4c4c4"/>
</g>
<g transform="translate(396.1,543) scale(1.12)">
<path d="M-2.8,-1.6v2.6c0,1.6 1.2,2.4 2.8,2.4s2.8,-0.8 2.8,-2.4v-1.4" fill="none" stroke="#a8a8a8" stroke-width="0.8" />
<path d="M0,-3v5" fill="none" stroke="#a8a8a8" stroke-width="0.7" />
<circle cx="0.0" cy="2.4" r="0.9" fill="#c4c4c4"/>
</g>
<g transform="translate(406.7,543) scale(1.12)">
<path d="M-2.8,-1.6v2.6c0,1.6 1.2,2.4 2.8,2.4s2.8,-0.8 2.8,-2.4v-1.4" fill="none" stroke="#a8a8a8" stroke-width="0.8" />
<path d="M0,-3v5" fill="none" stroke="#a8a8a8" stroke-width="0.7" />
<circle cx="0.0" cy="2.4" r="0.9" fill="#c4c4c4"/>
</g>
<g transform="translate(417.2,543) scale(1.12)">
<path d="M-3,1.6l4.6,-4.6l1.4,1.4l-4.6,4.6z" fill="#4cb06a" />
<path d="M-3,1.6v1.4h1.4" fill="none" stroke="#4cb06a" stroke-width="0.5" />
</g>
<g transform="translate(427.8,543) scale(1.12)">
<path d="M-3,-1.6l2.2,-1.8v5l-2.2,1.8z" fill="#4cb06a" />
<path d="M-0.4,-1.6l1.6,-1.4v5l-1.6,1.4z" fill="#b5d65a" />
<path d="M1.4,-1.6l2,-1.6v5l-2,1.6z" fill="#f08a3c" />
</g>
<g transform="translate(438.4,543) scale(1.12)">
<rect x="-3.2" y="-3.0" width="6.2" height="6.0" fill="#fbfbfb" stroke="#c4c4c4" stroke-width="0.4" />
<path d="M-2,1.8l3.6,-3.8l1,1l-3.6,3.6z" fill="#f0a94a" />
<path d="M-2.2,-1.6h2.4M-2.2,-0.2h1.4" fill="none" stroke="#cfcfcf" stroke-width="0.4" />
</g>
<g transform="translate(449.0,543) scale(1.12)">
<path d="M-3.4,-2.4h2.6l0.8,0.9h3.4v4.4h-6.8z" fill="#3f95d8" />
<path d="M-3.4,0h6.8v2.9h-6.8z" fill="#6fb3ea" />
</g>
<g transform="translate(459.6,543) scale(1.12)">
<rect x="-2.9" y="-0.5" width="1.4" height="1.4" fill="#777" />
<rect x="-0.7" y="-0.5" width="1.4" height="1.4" fill="#777" />
<rect x="1.5" y="-0.5" width="1.4" height="1.4" fill="#777" />
</g>
<g transform="translate(470.1,543) scale(1.12)">
<path d="M-2.8,-1.6v2.6c0,1.6 1.2,2.4 2.8,2.4s2.8,-0.8 2.8,-2.4v-1.4" fill="none" stroke="#a8a8a8" stroke-width="0.8" />
<path d="M0,-3v5" fill="none" stroke="#a8a8a8" stroke-width="0.7" />
<circle cx="0.0" cy="2.4" r="0.9" fill="#c4c4c4"/>
</g>
<g transform="translate(480.7,543) scale(1.12)">
<rect x="-2.9" y="-0.5" width="1.4" height="1.4" fill="#777" />
<rect x="-0.7" y="-0.5" width="1.4" height="1.4" fill="#777" />
<rect x="1.5" y="-0.5" width="1.4" height="1.4" fill="#777" />
</g>
<g transform="translate(491.3,543) scale(1.12)">
<path d="M-2.8,-1.6v2.6c0,1.6 1.2,2.4 2.8,2.4s2.8,-0.8 2.8,-2.4v-1.4" fill="none" stroke="#a8a8a8" stroke-width="0.8" />
<path d="M0,-3v5" fill="none" stroke="#a8a8a8" stroke-width="0.7" />
<circle cx="0.0" cy="2.4" r="0.9" fill="#c4c4c4"/>
</g>
<g transform="translate(501.9,543) scale(1.12)">
<path d="M-2.8,-3.2v6.6" fill="none" stroke="#9a9a9a" stroke-width="0.6" />
<rect x="-2.4" y="-3.2" width="5.4" height="3.4" fill="#3f8fd6" />
<rect x="-2.4" y="0.2" width="5.0" height="2.8" fill="#fafafa" stroke="#d4d4d4" stroke-width="0.3" />
</g>
<g transform="translate(512.5,543) scale(1.12)">
<rect x="-3.2" y="-3.0" width="6.2" height="6.0" fill="#fbfbfb" stroke="#c4c4c4" stroke-width="0.4" />
<path d="M-2,1.8l3.6,-3.8l1,1l-3.6,3.6z" fill="#f0a94a" />
<path d="M-2.2,-1.6h2.4M-2.2,-0.2h1.4" fill="none" stroke="#cfcfcf" stroke-width="0.4" />
</g>
<g transform="translate(523.0,543) scale(1.12)">
<path d="M-3.2,-2l1,-1h5.6v5l-1,1.2h-5.6z" fill="#3f95d8" />
<path d="M2.4,-2l1,-1v5l-1,1.2z" fill="#2a74b8" />
<path d="M-3.2,-2l1,-1h5.6l-1,1z" fill="#8cc4ee" />
</g>
<g transform="translate(533.6,543) scale(1.12)">
<rect x="-3.2" y="-3.0" width="6.2" height="6.0" fill="#fbfbfb" stroke="#c4c4c4" stroke-width="0.4" />
<path d="M-2,1.8l3.6,-3.8l1,1l-3.6,3.6z" fill="#f0a94a" />
<path d="M-2.2,-1.6h2.4M-2.2,-0.2h1.4" fill="none" stroke="#cfcfcf" stroke-width="0.4" />
</g>
<g transform="translate(544.2,543) scale(1.12)">
<path d="M-3.2,-2l1,-1h5.6v5l-1,1.2h-5.6z" fill="#3f95d8" />
<path d="M2.4,-2l1,-1v5l-1,1.2z" fill="#2a74b8" />
<path d="M-3.2,-2l1,-1h5.6l-1,1z" fill="#8cc4ee" />
</g>
<g transform="translate(554.8,543) scale(1.12)">
<rect x="-3.2" y="-3.0" width="6.2" height="6.0" fill="#d0d0d0" stroke="#666" stroke-width="0.6" />
<path d="M-3.2,-1h6.2M-1.2,-3v6" fill="none" stroke="#888" stroke-width="0.4" />
<rect x="-0.2" y="0.0" width="2.4" height="2.2" fill="#777" />
</g>
<g transform="translate(565.4,543) scale(1.12)">
<path d="M-2.8,-3.2v6.6" fill="none" stroke="#9a9a9a" stroke-width="0.6" />
<rect x="-2.4" y="-3.2" width="5.4" height="3.4" fill="#3f8fd6" />
<rect x="-2.4" y="0.2" width="5.0" height="2.8" fill="#fafafa" stroke="#d4d4d4" stroke-width="0.3" />
</g>
<g transform="translate(575.9,543) scale(1.12)">
<path d="M-3.2,-2l1,-1h5.6v5l-1,1.2h-5.6z" fill="#3f95d8" />
<path d="M2.4,-2l1,-1v5l-1,1.2z" fill="#2a74b8" />
<path d="M-3.2,-2l1,-1h5.6l-1,1z" fill="#8cc4ee" />
</g>
<g transform="translate(586.5,543) scale(1.12)">
<path d="M-3.2,-2l1,-1h5.6v5l-1,1.2h-5.6z" fill="#3f95d8" />
<path d="M2.4,-2l1,-1v5l-1,1.2z" fill="#2a74b8" />
<path d="M-3.2,-2l1,-1h5.6l-1,1z" fill="#8cc4ee" />
</g>
<g transform="translate(597.1,543) scale(1.12)">
<path d="M-2.8,-3.2v6.6" fill="none" stroke="#9a9a9a" stroke-width="0.6" />
<rect x="-2.4" y="-3.2" width="5.4" height="3.4" fill="#3f8fd6" />
<rect x="-2.4" y="0.2" width="5.0" height="2.8" fill="#fafafa" stroke="#d4d4d4" stroke-width="0.3" />
</g>
<g transform="translate(607.7,543) scale(1.12)">
<path d="M-3.2,-2l1,-1h5.6v5l-1,1.2h-5.6z" fill="#3f95d8" />
<path d="M2.4,-2l1,-1v5l-1,1.2z" fill="#2a74b8" />
<path d="M-3.2,-2l1,-1h5.6l-1,1z" fill="#8cc4ee" />
</g>
<path d="M66,549.8h546" fill="none" stroke="#999" stroke-width="0.5" stroke-dasharray="0.8 1.2"/>
<rect x="86.9" y="548.3" width="3.0" height="3.0" fill="#f0f0f0" stroke="#444" stroke-width="0.7" />
<rect x="256.5" y="548.3" width="3.0" height="3.0" fill="#f0f0f0" stroke="#444" stroke-width="0.7" />
<rect x="287.7" y="548.3" width="3.0" height="3.0" fill="#f0f0f0" stroke="#444" stroke-width="0.7" />
<rect x="309.2" y="548.3" width="3.0" height="3.0" fill="#f0f0f0" stroke="#444" stroke-width="0.7" />
<rect x="330.6" y="548.3" width="3.0" height="3.0" fill="#f0f0f0" stroke="#444" stroke-width="0.7" />
<rect x="456.8" y="548.3" width="3.0" height="3.0" fill="#f0f0f0" stroke="#444" stroke-width="0.7" />
<rect x="478.1" y="548.3" width="3.0" height="3.0" fill="#f0f0f0" stroke="#444" stroke-width="0.7" />
<path d="M68.1,548.4v1.4" fill="none" stroke="#bbb" stroke-width="0.4" />
<path d="M78.7,548.4v1.4" fill="none" stroke="#bbb" stroke-width="0.4" />
<path d="M89.3,548.4v1.4" fill="none" stroke="#bbb" stroke-width="0.4" />
<path d="M99.8,548.4v1.4" fill="none" stroke="#bbb" stroke-width="0.4" />
<path d="M110.4,548.4v1.4" fill="none" stroke="#bbb" stroke-width="0.4" />
<path d="M121.0,548.4v1.4" fill="none" stroke="#bbb" stroke-width="0.4" />
<path d="M131.6,548.4v1.4" fill="none" stroke="#bbb" stroke-width="0.4" />
<path d="M142.2,548.4v1.4" fill="none" stroke="#bbb" stroke-width="0.4" />
<path d="M152.7,548.4v1.4" fill="none" stroke="#bbb" stroke-width="0.4" />
<path d="M163.3,548.4v1.4" fill="none" stroke="#bbb" stroke-width="0.4" />
<path d="M173.9,548.4v1.4" fill="none" stroke="#bbb" stroke-width="0.4" />
<path d="M184.5,548.4v1.4" fill="none" stroke="#bbb" stroke-width="0.4" />
<path d="M195.1,548.4v1.4" fill="none" stroke="#bbb" stroke-width="0.4" />
<path d="M205.6,548.4v1.4" fill="none" stroke="#bbb" stroke-width="0.4" />
<path d="M216.2,548.4v1.4" fill="none" stroke="#bbb" stroke-width="0.4" />
<path d="M226.8,548.4v1.4" fill="none" stroke="#bbb" stroke-width="0.4" />
<path d="M237.4,548.4v1.4" fill="none" stroke="#bbb" stroke-width="0.4" />
<path d="M248.0,548.4v1.4" fill="none" stroke="#bbb" stroke-width="0.4" />
<path d="M258.5,548.4v1.4" fill="none" stroke="#bbb" stroke-width="0.4" />
<path d="M269.1,548.4v1.4" fill="none" stroke="#bbb" stroke-width="0.4" />
<path d="M279.7,548.4v1.4" fill="none" stroke="#bbb" stroke-width="0.4" />
<path d="M290.3,548.4v1.4" fill="none" stroke="#bbb" stroke-width="0.4" />
<path d="M300.9,548.4v1.4" fill="none" stroke="#bbb" stroke-width="0.4" />
<path d="M311.4,548.4v1.4" fill="none" stroke="#bbb" stroke-width="0.4" />
<path d="M322.0,548.4v1.4" fill="none" stroke="#bbb" stroke-width="0.4" />
<path d="M332.6,548.4v1.4" fill="none" stroke="#bbb" stroke-width="0.4" />
<path d="M343.2,548.4v1.4" fill="none" stroke="#bbb" stroke-width="0.4" />
<path d="M353.8,548.4v1.4" fill="none" stroke="#bbb" stroke-width="0.4" />
<path d="M364.3,548.4v1.4" fill="none" stroke="#bbb" stroke-width="0.4" />
<path d="M374.9,548.4v1.4" fill="none" stroke="#bbb" stroke-width="0.4" />
<path d="M385.5,548.4v1.4" fill="none" stroke="#bbb" stroke-width="0.4" />
<path d="M396.1,548.4v1.4" fill="none" stroke="#bbb" stroke-width="0.4" />
<path d="M406.7,548.4v1.4" fill="none" stroke="#bbb" stroke-width="0.4" />
<path d="M417.2,548.4v1.4" fill="none" stroke="#bbb" stroke-width="0.4" />
<path d="M427.8,548.4v1.4" fill="none" stroke="#bbb" stroke-width="0.4" />
<path d="M438.4,548.4v1.4" fill="none" stroke="#bbb" stroke-width="0.4" />
<path d="M449.0,548.4v1.4" fill="none" stroke="#bbb" stroke-width="0.4" />
<path d="M459.6,548.4v1.4" fill="none" stroke="#bbb" stroke-width="0.4" />
<path d="M470.1,548.4v1.4" fill="none" stroke="#bbb" stroke-width="0.4" />
<path d="M480.7,548.4v1.4" fill="none" stroke="#bbb" stroke-width="0.4" />
<path d="M491.3,548.4v1.4" fill="none" stroke="#bbb" stroke-width="0.4" />
<path d="M501.9,548.4v1.4" fill="none" stroke="#bbb" stroke-width="0.4" />
<path d="M512.5,548.4v1.4" fill="none" stroke="#bbb" stroke-width="0.4" />
<path d="M523.0,548.4v1.4" fill="none" stroke="#bbb" stroke-width="0.4" />
<path d="M533.6,548.4v1.4" fill="none" stroke="#bbb" stroke-width="0.4" />
<path d="M544.2,548.4v1.4" fill="none" stroke="#bbb" stroke-width="0.4" />
<path d="M554.8,548.4v1.4" fill="none" stroke="#bbb" stroke-width="0.4" />
<path d="M565.4,548.4v1.4" fill="none" stroke="#bbb" stroke-width="0.4" />
<path d="M575.9,548.4v1.4" fill="none" stroke="#bbb" stroke-width="0.4" />
<path d="M586.5,548.4v1.4" fill="none" stroke="#bbb" stroke-width="0.4" />
<path d="M597.1,548.4v1.4" fill="none" stroke="#bbb" stroke-width="0.4" />
<path d="M607.7,548.4v1.4" fill="none" stroke="#bbb" stroke-width="0.4" />
<circle cx="624.6" cy="544.9" r="2.0" fill="none" stroke="#444" stroke-width="1.3"/>
<path d="M626.9,544.9L627.9,544.9" fill="none" stroke="#444" stroke-width="0.9" />
<path d="M626.2,546.5L626.9,547.2" fill="none" stroke="#444" stroke-width="0.9" />
<path d="M624.6,547.2L624.6,548.2" fill="none" stroke="#444" stroke-width="0.9" />
<path d="M623.0,546.5L622.3,547.2" fill="none" stroke="#444" stroke-width="0.9" />
<path d="M622.3,544.9L621.3,544.9" fill="none" stroke="#444" stroke-width="0.9" />
<path d="M623.0,543.3L622.3,542.6" fill="none" stroke="#444" stroke-width="0.9" />
<path d="M624.6,542.6L624.6,541.6" fill="none" stroke="#444" stroke-width="0.9" />
<path d="M626.2,543.3L626.9,542.6" fill="none" stroke="#444" stroke-width="0.9" />
<path d="M605.7,75.8l15.2,9.4v14.6l-15.2,11.3l-15.7,-11.3v-15.2z" fill="#e4e4e4" stroke="#c4c4c4" stroke-width="0.5" />
<path d="M605.7,75.8l15.2,9.4l-15.2,8.6l-15.7,-9.2z" fill="#c9c9c9" stroke="#bdbdbd" stroke-width="0.5" />
<path d="M590,84.6l15.7,9.2v17.3l-15.7,-11.3z" fill="#d9d9d9" stroke="#c4c4c4" stroke-width="0.5" />
<path d="M605.7,93.8l15.2,-8.6v14.6l-15.2,11.3z" fill="#e6e6e6" stroke="#c4c4c4" stroke-width="0.5" />
<text transform="matrix(0.86,0.5,-0.86,0.5,605.6,86.6)" font-size="4.6" fill="#9a9a9a" text-anchor="middle" font-weight="bold">TOP</text>
<text transform="matrix(0.86,0.52,0,1,597.8,100.2)" font-size="3.6" fill="#a8a8a8" text-anchor="middle" font-weight="bold">FRONT</text>
<text transform="matrix(0.86,-0.5,0,1,613.4,100.6)" font-size="3.6" fill="#b4b4b4" text-anchor="middle" font-weight="bold">RIGHT</text>
<path d="M605.7,75.8l19,11.6" fill="none" stroke="#ee6670" stroke-width="0.7" />
<path d="M605.7,75.8l-19,10.6" fill="none" stroke="#5cd068" stroke-width="0.7" />
<text x="583.7" y="88.9" font-size="4.6" fill="#4cc45a" text-anchor="middle" >Y</text>
<text x="627.8" y="90.2" font-size="4.6" fill="#ea5a64" text-anchor="middle" >X</text>
<path d="M0.55,0v555" fill="none" stroke="#6a6a6a" stroke-width="1.1" />
<path d="M633.5,0v555" fill="none" stroke="#dcdcdc" stroke-width="1" />
<path d="M0,554.4h634" fill="none" stroke="#5a5a5a" stroke-width="1.2" />
<path d="M0,0h2.6c-1.6,0.3 -2.3,1 -2.6,2.6z" fill="#000" />
<path d="M634,555h-2.6c1.6,-0.3 2.3,-1 2.6,-2.6z" fill="#000" />
<path d="M0,555h2.6c-1.6,-0.3 -2.3,-1 -2.6,-2.6z" fill="#000" />
<path d="M634,0h-2.6c1.6,0.3 2.3,1 2.6,2.6z" fill="#000" />
</svg>
</body></html>
